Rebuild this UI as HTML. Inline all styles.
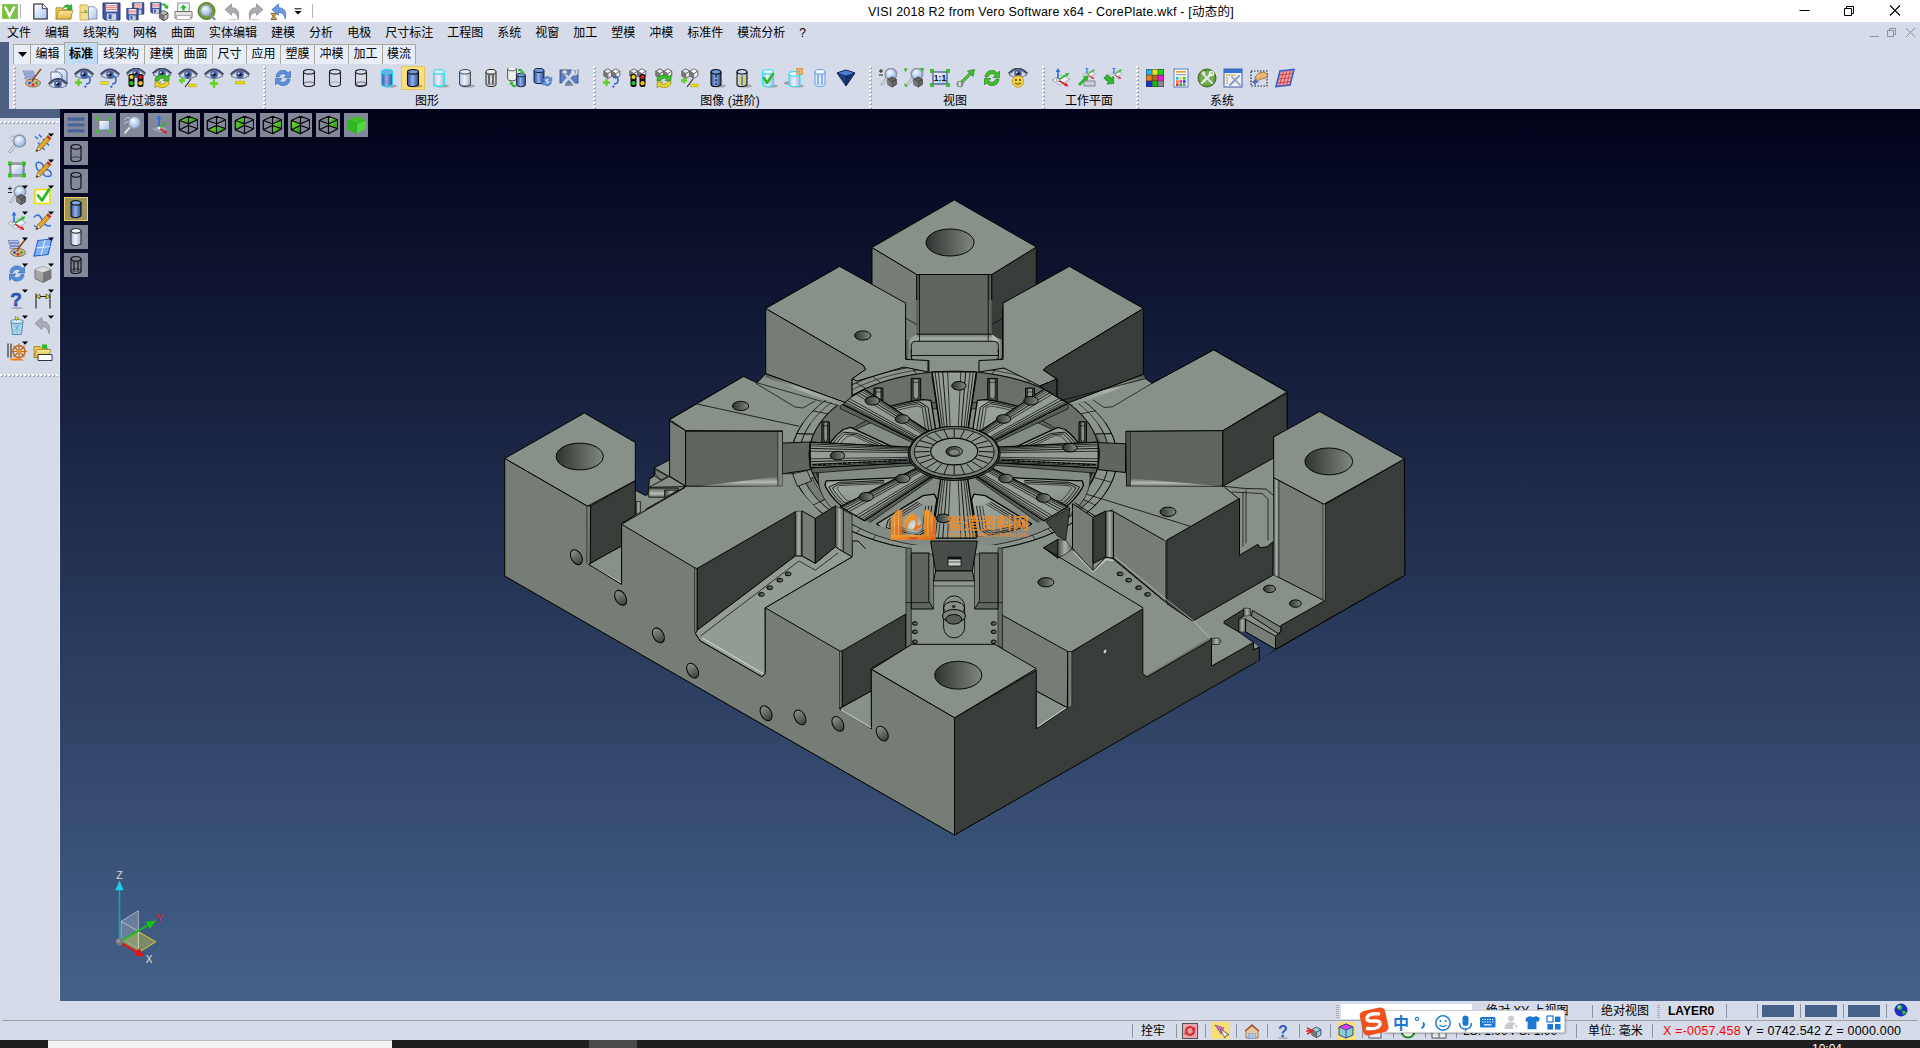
<!DOCTYPE html>
<html lang="zh"><head><meta charset="utf-8"><title>VISI 2018 R2 - CorePlate.wkf</title>
<style>

*{box-sizing:border-box;margin:0;padding:0}
html,body{width:1920px;height:1048px;overflow:hidden;background:#d6dbe9;font-family:"Liberation Sans","Noto Sans CJK SC",sans-serif;font-size:12px;color:#000}
.abs{position:absolute}
#title{position:absolute;left:0;top:0;width:1920px;height:22px;background:#fff}
#title .cap{position:absolute;left:868px;top:1px;font-size:12.5px;white-space:nowrap;color:#000;letter-spacing:0.22px}
#menu{position:absolute;left:0;top:22px;width:1920px;height:21px;background:#d6dbe9;white-space:nowrap}
#menu span{display:inline-block;padding:0 7px;height:21px;line-height:23px;font-size:12px}
#strip1{position:absolute;left:0;top:42px;width:9px;height:75px;background:#4d6082}
#strip2{position:absolute;left:0;top:109px;width:60px;height:9px;background:#4d6082}
#tabs{position:absolute;left:13px;top:44px;height:20px;white-space:nowrap;font-size:0}
#tabs span{display:inline-block;height:20px;line-height:19px;font-size:12px;background:#e7eefa;border-left:1px solid #aca899;border-top:1px solid #aca899;text-align:center;vertical-align:top}
#tabs span:last-child{border-right:1px solid #aca899}
#tabs span.act+span{border-left:none}
#tabs span.act{background:#c1dcf9;font-weight:bold;border-color:#aca899;border-right:1px solid #aca899;height:22px;margin-top:-2px;line-height:22px}
#ribbon{position:absolute;left:9px;top:64px;width:1911px;height:45px;background:#d6dbe9}
.glabel{position:absolute;top:94px;font-size:12px;line-height:14px;white-space:nowrap;transform:translateX(-50%)}
.grip{position:absolute;top:66px;width:3px;height:40px;background-image:linear-gradient(#fff 50%,transparent 50%);background-size:3px 4px}
.ic{position:absolute;width:24px;height:24px}
#view{position:absolute;left:60px;top:109px;width:1860px;height:892px;background:linear-gradient(#01021a 0%,#45618a 100%);overflow:hidden}
#left{position:absolute;left:0;top:118px;width:60px;height:883px;background:#d6dbe9;border-right:1px solid #e4e8f2}
.hgrip{position:absolute;left:2px;width:56px;height:3px;background-image:linear-gradient(90deg,#fff 50%,transparent 50%);background-size:4px 3px}
.vb{position:absolute;width:24px;height:24px;background:#83879a}
.vb.act{background:#a0975f;border:1px solid #f0cf6e}
#status{position:absolute;left:0;top:1001px;width:1920px;height:39px;background:#d6dbe9}
#task{position:absolute;left:0;top:1040px;width:1920px;height:8px;background:#1f1f1f}
.st{position:absolute;white-space:nowrap;font-size:12px;line-height:14px}
.sep{position:absolute;width:1px;background:#8d93a3}
</style></head>
<body>
<div id="title"><svg width="0" height="0" style="position:absolute"><defs>
<linearGradient id="gBlue" x1="0" x2="1"><stop offset="0" stop-color="#2c4f9e"/><stop offset="0.45" stop-color="#8fb0ea"/><stop offset="1" stop-color="#2a488f"/></linearGradient>
<linearGradient id="gLBlue" x1="0" x2="1"><stop offset="0" stop-color="#a9bfe6"/><stop offset="0.45" stop-color="#eef3fc"/><stop offset="1" stop-color="#9db2dc"/></linearGradient>
<linearGradient id="gGray" x1="0" x2="1"><stop offset="0" stop-color="#777"/><stop offset="0.45" stop-color="#e8e8e8"/><stop offset="1" stop-color="#666"/></linearGradient>
<linearGradient id="gEye" x1="0" y1="0" x2="0" y2="1"><stop offset="0" stop-color="#3c4a70"/><stop offset="1" stop-color="#8b9cc4"/></linearGradient>
<linearGradient id="gDoc" x1="0" y1="0" x2="1" y2="1"><stop offset="0" stop-color="#ffffff"/><stop offset="1" stop-color="#a9c2ef"/></linearGradient>
<linearGradient id="gFold" x1="0" y1="0" x2="0" y2="1"><stop offset="0" stop-color="#fbe9a0"/><stop offset="1" stop-color="#e2b23f"/></linearGradient>
<linearGradient id="gGreen" x1="0" y1="0" x2="1" y2="1"><stop offset="0" stop-color="#7be03a"/><stop offset="1" stop-color="#1f8f1a"/></linearGradient>
<linearGradient id="gSq" x1="0" y1="0" x2="1" y2="1"><stop offset="0" stop-color="#fffef0"/><stop offset="1" stop-color="#9fc0f5"/></linearGradient>
<radialGradient id="gLens" cx="0.4" cy="0.35" r="0.7"><stop offset="0" stop-color="#f4f9ff"/><stop offset="1" stop-color="#8db0e0"/></radialGradient>
<pattern id="gdot" width="4" height="4" patternUnits="userSpaceOnUse"><rect x="1" y="1" width="2" height="2" fill="#9fa3b0"/><rect x="0" y="0" width="2" height="2" fill="#ffffff"/></pattern>
</defs></svg><svg class="abs" style="left:2px;top:3.5px" width="16" height="15" viewBox="0 0 16 15"><rect x="0" y="0" width="16" height="15" fill="#7ac043"/><rect x="0" y="0" width="16" height="15" fill="none" stroke="#9ad56a" stroke-width="1"/><path d="M3.5 3.5 L7.5 12 L12.5 2.5" fill="none" stroke="#fff" stroke-width="2.4" stroke-linejoin="miter"/><circle cx="3.2" cy="3.2" r="0.9" fill="#fff"/></svg><div class="sep" style="left:20px;top:4px;height:14px;background:#b4b4b4"></div><svg class="abs" style="left:31px;top:2px" width="19" height="19" viewBox="0 0 20 20"><path d="M3 2 h9 l5 5 v11 h-14z" fill="url(#gDoc)" stroke="#111" stroke-width="1.1"/><path d="M12 2 v5 h5" fill="#fff" stroke="#111" stroke-width="0.8"/></svg><svg class="abs" style="left:55px;top:2px" width="19" height="19" viewBox="0 0 20 20"><path d="M1 6 h6 l2 2 h8 v10 h-16z" fill="#e9c34f" stroke="#9a7a1c" stroke-width="0.7"/><path d="M1 18 L4 9 h15 l-3 9z" fill="url(#gFold)" stroke="#9a7a1c" stroke-width="0.7"/><path d="M8 7 q3 -6 8 -3 l1.5 -1.5 l0.5 5.5 l-5.5 -0.5 l1.7 -1.6 q-3 -1.6 -6.2 1.1z" fill="#2eb82e" stroke="#137013" stroke-width="0.5"/></svg><svg class="abs" style="left:79px;top:2px" width="19" height="19" viewBox="0 0 20 20"><path d="M1 3 h7 l3 3 v5 h-10z" fill="#f4dc8a" stroke="#b99a3a" stroke-width="0.7"/><path d="M1 11 h7 l3 3 v5 h-10z" fill="#f4dc8a" stroke="#b99a3a" stroke-width="0.7"/><path d="M10 5 h6 l3 3 v10 h-9z" fill="url(#gDoc)" stroke="#6a7aa8" stroke-width="0.8"/><path d="M6 8 l3 2 l-3 2z" fill="#5fbf3a"/></svg><svg class="abs" style="left:102px;top:2px" width="19" height="19" viewBox="0 0 20 20"><g transform="translate(0 0) scale(1)"><path d="M1 1 h18 v18 h-16 l-2 -2z" fill="#3b57a6" stroke="#1c2c60" stroke-width="0.8"/><rect x="4" y="2" width="12" height="8" fill="#f4f4f4"/><path d="M4 4 h12 M4 6 h12 M4 8 h12" stroke="#d33" stroke-width="0.7"/><rect x="5" y="12" width="10" height="7" fill="#c9ced9"/><rect x="7" y="13" width="3" height="5" fill="#3b57a6"/></g></svg><svg class="abs" style="left:126px;top:2px" width="19" height="19" viewBox="0 0 20 20"><g transform="translate(6 0) scale(0.68)"><path d="M1 1 h18 v18 h-16 l-2 -2z" fill="#3b57a6" stroke="#1c2c60" stroke-width="0.8"/><rect x="4" y="2" width="12" height="8" fill="#f4f4f4"/><path d="M4 4 h12 M4 6 h12 M4 8 h12" stroke="#d33" stroke-width="0.7"/><rect x="5" y="12" width="10" height="7" fill="#c9ced9"/><rect x="7" y="13" width="3" height="5" fill="#3b57a6"/></g><g transform="translate(0 6) scale(0.68)"><path d="M1 1 h18 v18 h-16 l-2 -2z" fill="#3b57a6" stroke="#1c2c60" stroke-width="0.8"/><rect x="4" y="2" width="12" height="8" fill="#f4f4f4"/><path d="M4 4 h12 M4 6 h12 M4 8 h12" stroke="#d33" stroke-width="0.7"/><rect x="5" y="12" width="10" height="7" fill="#c9ced9"/><rect x="7" y="13" width="3" height="5" fill="#3b57a6"/></g></svg><svg class="abs" style="left:150px;top:2px" width="19" height="19" viewBox="0 0 20 20"><g transform="translate(0 0) scale(0.62)"><path d="M1 1 h18 v18 h-16 l-2 -2z" fill="#3b57a6" stroke="#1c2c60" stroke-width="0.8"/><rect x="4" y="2" width="12" height="8" fill="#f4f4f4"/><path d="M4 4 h12 M4 6 h12 M4 8 h12" stroke="#d33" stroke-width="0.7"/><rect x="5" y="12" width="10" height="7" fill="#c9ced9"/><rect x="7" y="13" width="3" height="5" fill="#3b57a6"/></g><g transform="translate(9 8) scale(0.9)"><path d="M1 4 L6 1 L11 4 L11 10 L6 13 L1 10z" fill="#bbb" stroke="#333" stroke-width="0.9"/><path d="M1 4 L6 7 L11 4 M6 7 V13" fill="none" stroke="#333" stroke-width="0.9"/><path d="M1 4 L6 7 V13 L1 10z" fill="#777"/></g><path d="M12 2 q4 -2 6 2 l1.4 -1 l-0.4 4.4 l-4.4 -1.2 l1.5 -1 q-1.4 -2 -3.6 -1.2z" fill="#2eb82e"/></svg><svg class="abs" style="left:174px;top:2px" width="19" height="19" viewBox="0 0 20 20"><rect x="4" y="1" width="12" height="9" fill="#eef2fa" stroke="#667" stroke-width="0.7"/><path d="M10 2.5 l-3.5 4 h2.3 v2.5 h2.4 v-2.5 h2.3z" fill="#2eb82e"/><path d="M1 10 h18 v7 h-18z" fill="#e4e4e4" stroke="#555" stroke-width="0.8"/><rect x="3" y="14" width="14" height="4.5" fill="#fff" stroke="#777" stroke-width="0.6"/></svg><svg class="abs" style="left:197px;top:2px" width="19" height="19" viewBox="0 0 20 20"><circle cx="10" cy="9.5" r="9" fill="#6f9a3a" stroke="#4f7a20" stroke-width="1"/><circle cx="9.5" cy="9" r="5.6" fill="url(#gLens)" stroke="#9aa6b8" stroke-width="1.3"/><path d="M14 13.5 L18.5 18" stroke="#8a93a3" stroke-width="2.4" stroke-linecap="round"/></svg><svg class="abs" style="left:223px;top:2px" width="19" height="19" viewBox="0 0 20 20"><g><path d="M2 8 L9 2 V6 C15 6 18 10 16 18 C15 13 13 11 9 11 V14z" fill="#a9adb3" stroke="#80848a" stroke-width="0.7"/></g><ellipse cx="11" cy="18.5" rx="6" ry="1.2" fill="#000" opacity="0.15"/></svg><svg class="abs" style="left:246px;top:2px" width="19" height="19" viewBox="0 0 20 20"><g transform="translate(20 0) scale(-1 1)"><path d="M2 8 L9 2 V6 C15 6 18 10 16 18 C15 13 13 11 9 11 V14z" fill="#a9adb3" stroke="#80848a" stroke-width="0.7"/></g><ellipse cx="9" cy="18.5" rx="6" ry="1.2" fill="#000" opacity="0.15"/></svg><svg class="abs" style="left:270px;top:2px" width="19" height="19" viewBox="0 0 20 20"><g><path d="M2 8 L9 2 V6 C15 6 18 10 16 18 C15 13 13 11 9 11 V14z" fill="#6a9be0" stroke="#3a66b0" stroke-width="0.7"/></g><path d="M1 12 h6 l-2.2 3 l2.2 3.5 h-6 l2.2 -3.5z" fill="#c9a35a" stroke="#6a4a12" stroke-width="0.8"/></svg><svg class="abs" style="left:294px;top:8px" width="8" height="8" viewBox="0 0 8 8"><path d="M0.5 0.8 h7" stroke="#000" stroke-width="1"/><path d="M0.5 3 h7 l-3.5 3.6z" fill="#000"/></svg><div class="sep" style="left:312px;top:4px;height:14px;background:#b4b4b4"></div><div class="cap">VISI 2018 R2 from Vero Software x64 - CorePlate.wkf - [动态的]</div><svg class="abs" style="left:1790px;top:0" width="130" height="22" viewBox="0 0 130 22"><path d="M9.5 10.5 h10" stroke="#000" stroke-width="1"/><path d="M54.5 8.5 h7 v7 h-7z M56.5 8.5 v-2 h7 v7 h-2" fill="none" stroke="#000" stroke-width="1"/><path d="M100 5.5 l10 10 M110 5.5 l-10 10" stroke="#000" stroke-width="1.1"/></svg></div>
<div id="menu"><span>文件</span><span>编辑</span><span>线架构</span><span>网格</span><span>曲面</span><span>实体编辑</span><span>建模</span><span>分析</span><span>电极</span><span>尺寸标注</span><span>工程图</span><span>系统</span><span>视窗</span><span>加工</span><span>塑模</span><span>冲模</span><span>标准件</span><span>模流分析</span><span>?</span><svg class="abs" style="left:1866px;top:3px" width="54" height="16" viewBox="0 0 54 16"><path d="M4 11.5 h9" stroke="#8d919c" stroke-width="1"/><path d="M21.5 5.5 h6 v6 h-6z M23.5 5.5 v-2 h6 v6 h-2" fill="none" stroke="#8d919c" stroke-width="1"/><path d="M40 3 l9 9 M49 3 l-9 9" stroke="#8d919c" stroke-width="1"/></svg></div>
<div id="ribbon"></div><div id="strip1"></div>
<div id="tabs"><span style="width:17px"><svg width="9" height="5" viewBox="0 0 9 5" style="vertical-align:middle"><path d="M0 0h9L4.5 5z" fill="#000"/></svg></span><span style="width:34px">编辑</span><span style="width:34px" class="act">标准</span><span style="width:46px">线架构</span><span style="width:34px">建模</span><span style="width:34px">曲面</span><span style="width:34px">尺寸</span><span style="width:34px">应用</span><span style="width:34px">塑膜</span><span style="width:34px">冲模</span><span style="width:34px">加工</span><span style="width:34px">模流</span></div>
<svg class="abs" style="left:13px;top:66px" width="3" height="43"><rect width="3" height="43" fill="url(#gdot)"/></svg><svg class="abs" style="left:22px;top:68px" width="20" height="20" viewBox="0 0 20 20"><path d="M1 3 h10 l1 2 h-10z M2 6 h10 l1 2 h-10z M3 9 h9 l1 2 h-10z" fill="#b9c7ee" stroke="#5266a8" stroke-width="0.6"/><ellipse cx="11" cy="15" rx="7.5" ry="4" fill="#d8b48a" stroke="#7a5a33" stroke-width="0.8"/><circle cx="7.5" cy="15" r="1.5" fill="#2b5fd0"/><circle cx="11" cy="16.7" r="1.5" fill="#d12f2f"/><circle cx="14.5" cy="15" r="1.5" fill="#2ea82e"/><path d="M19 1 L10.5 12" stroke="#8a4a1d" stroke-width="1.6"/><path d="M10.5 12 l-1.6 2.6 l2.8 -1.6z" fill="#333"/></svg><svg class="abs" style="left:48px;top:68px" width="20" height="20" viewBox="0 0 20 20"><path d="M8 1 h8 l3 3 v11 h-11z" fill="url(#gDoc)" stroke="#3a4c7d" stroke-width="0.8"/><path d="M3 4 h8 l3 3 v10 h-11z" fill="url(#gDoc)" stroke="#3a4c7d" stroke-width="0.8"/><g transform="translate(0 9.5)"><path d="M1 8 Q10 -2 19 8 Q10 13 1 8z" fill="#d4dbea" stroke="#4f5a7a" stroke-width="0.8"/><path d="M0.5 6.5 Q10 -3.5 19.5 6.5" fill="none" stroke="#3c4563" stroke-width="1.8"/><circle cx="10" cy="6.6" r="3.8" fill="#46639d"/><circle cx="10" cy="6.6" r="1.7" fill="#0f1730"/><circle cx="8.8" cy="5.4" r="0.9" fill="#dfe8fb"/></g></svg><svg class="abs" style="left:74px;top:68px" width="20" height="20" viewBox="0 0 20 20"><g transform="translate(0 0)"><path d="M1 8 Q10 -2 19 8 Q10 13 1 8z" fill="#d4dbea" stroke="#4f5a7a" stroke-width="0.8"/><path d="M0.5 6.5 Q10 -3.5 19.5 6.5" fill="none" stroke="#3c4563" stroke-width="1.8"/><circle cx="10" cy="6.6" r="3.8" fill="#46639d"/><circle cx="10" cy="6.6" r="1.7" fill="#0f1730"/><circle cx="8.8" cy="5.4" r="0.9" fill="#dfe8fb"/></g><path d="M1 14.5 h7 M4.5 11 v7" stroke="#62d321" stroke-width="2.4" fill="none"/><path d="M11 10 q5 -4 5 2 q0 4 -4 4" fill="none" stroke="#2f66c8" stroke-width="1.6"/><path d="M12.5 17.5 l-3 0.5 l2.5 2.5z" fill="#2f66c8"/></svg><svg class="abs" style="left:100px;top:68px" width="20" height="20" viewBox="0 0 20 20"><g transform="translate(0 0)"><path d="M1 8 Q10 -2 19 8 Q10 13 1 8z" fill="#d4dbea" stroke="#4f5a7a" stroke-width="0.8"/><path d="M0.5 6.5 Q10 -3.5 19.5 6.5" fill="none" stroke="#3c4563" stroke-width="1.8"/><circle cx="10" cy="6.6" r="3.8" fill="#46639d"/><circle cx="10" cy="6.6" r="1.7" fill="#0f1730"/><circle cx="8.8" cy="5.4" r="0.9" fill="#dfe8fb"/></g><path d="M0.6 15 h7.8" stroke="#a79c00" stroke-width="3.2" fill="none"/><path d="M1 15 h7" stroke="#efe300" stroke-width="2.2" fill="none"/><path d="M11 10 q5 -4 5 2 q0 4 -4 4" fill="none" stroke="#2f66c8" stroke-width="1.6"/><path d="M12.5 17.5 l-3 0.5 l2.5 2.5z" fill="#2f66c8"/></svg><svg class="abs" style="left:126px;top:68px" width="20" height="20" viewBox="0 0 20 20"><g transform="translate(0 -1)"><path d="M1 8 Q10 -2 19 8 Q10 13 1 8z" fill="#d4dbea" stroke="#4f5a7a" stroke-width="0.8"/><path d="M0.5 6.5 Q10 -3.5 19.5 6.5" fill="none" stroke="#3c4563" stroke-width="1.8"/><circle cx="10" cy="6.6" r="3.8" fill="#46639d"/><circle cx="10" cy="6.6" r="1.7" fill="#0f1730"/><circle cx="8.8" cy="5.4" r="0.9" fill="#dfe8fb"/></g><rect x="2.5" y="6" width="6" height="13" rx="2" fill="#111"/><circle cx="5.5" cy="9" r="2.1" fill="#f2d21b"/><circle cx="5.5" cy="15.2" r="2.1" fill="#1fc41f"/><rect x="11.5" y="6" width="6" height="13" rx="2" fill="#111"/><circle cx="14.5" cy="9" r="2.1" fill="#e31b1b"/><circle cx="14.5" cy="15.2" r="2.1" fill="#f2c21b"/></svg><svg class="abs" style="left:152px;top:68px" width="20" height="20" viewBox="0 0 20 20"><g transform="translate(0 -1)"><path d="M1 8 Q10 -2 19 8 Q10 13 1 8z" fill="#d4dbea" stroke="#4f5a7a" stroke-width="0.8"/><path d="M0.5 6.5 Q10 -3.5 19.5 6.5" fill="none" stroke="#3c4563" stroke-width="1.8"/><circle cx="10" cy="6.6" r="3.8" fill="#46639d"/><circle cx="10" cy="6.6" r="1.7" fill="#0f1730"/><circle cx="8.8" cy="5.4" r="0.9" fill="#dfe8fb"/></g><path d="M3 13 A7 5.5 0 0 1 15 8.5 L17 6.5 V12.5 H11 L13 10.5 A4.5 3.5 0 0 0 6.5 13z" fill="#3fbf2a" stroke="#1d7a12" stroke-width="0.6"/><path d="M17 13.5 A7 5.5 0 0 1 5 18 L3 20 V14 H9 L7 16 A4.5 3.5 0 0 0 13.5 13.5z" fill="#e6d52a" stroke="#8d7f00" stroke-width="0.6"/></svg><svg class="abs" style="left:178px;top:68px" width="20" height="20" viewBox="0 0 20 20"><g transform="translate(0 0)"><path d="M1 8 Q10 -2 19 8 Q10 13 1 8z" fill="#d4dbea" stroke="#4f5a7a" stroke-width="0.8"/><path d="M0.5 6.5 Q10 -3.5 19.5 6.5" fill="none" stroke="#3c4563" stroke-width="1.8"/><circle cx="10" cy="6.6" r="3.8" fill="#46639d"/><circle cx="10" cy="6.6" r="1.7" fill="#0f1730"/><circle cx="8.8" cy="5.4" r="0.9" fill="#dfe8fb"/></g><path d="M1 12.5 h6 M4 9.5 v6" stroke="#62d321" stroke-width="2.4" fill="none"/><path d="M7 19 L13 11" stroke="#222" stroke-width="1.1"/><path d="M10.6 17.5 h7.8" stroke="#a79c00" stroke-width="3.2" fill="none"/><path d="M11 17.5 h7" stroke="#efe300" stroke-width="2.2" fill="none"/></svg><svg class="abs" style="left:204px;top:68px" width="20" height="20" viewBox="0 0 20 20"><g transform="translate(0 0)"><path d="M1 8 Q10 -2 19 8 Q10 13 1 8z" fill="#d4dbea" stroke="#4f5a7a" stroke-width="0.8"/><path d="M0.5 6.5 Q10 -3.5 19.5 6.5" fill="none" stroke="#3c4563" stroke-width="1.8"/><circle cx="10" cy="6.6" r="3.8" fill="#46639d"/><circle cx="10" cy="6.6" r="1.7" fill="#0f1730"/><circle cx="8.8" cy="5.4" r="0.9" fill="#dfe8fb"/></g><path d="M5.8 15.5 h8.4 M10 11.3 v8.4" stroke="#62d321" stroke-width="2.4" fill="none"/></svg><svg class="abs" style="left:230px;top:68px" width="20" height="20" viewBox="0 0 20 20"><g transform="translate(0 0)"><path d="M1 8 Q10 -2 19 8 Q10 13 1 8z" fill="#d4dbea" stroke="#4f5a7a" stroke-width="0.8"/><path d="M0.5 6.5 Q10 -3.5 19.5 6.5" fill="none" stroke="#3c4563" stroke-width="1.8"/><circle cx="10" cy="6.6" r="3.8" fill="#46639d"/><circle cx="10" cy="6.6" r="1.7" fill="#0f1730"/><circle cx="8.8" cy="5.4" r="0.9" fill="#dfe8fb"/></g><path d="M5.1 14.5 h9.8" stroke="#a79c00" stroke-width="3.2" fill="none"/><path d="M5.5 14.5 h9" stroke="#efe300" stroke-width="2.2" fill="none"/></svg><div class="glabel" style="left:136px">属性/过滤器</div><svg class="abs" style="left:263px;top:66px" width="3" height="43"><rect width="3" height="43" fill="url(#gdot)"/></svg><svg class="abs" style="left:273px;top:68px" width="20" height="20" viewBox="0 0 20 20"><g transform="scale(1)"><path d="M3 9 A7 7 0 0 1 15.5 5 L17.5 3 V9.5 H11 L13.3 7.2 A4.2 4.2 0 0 0 6 9z" fill="#5b8fd9" stroke="#2e63b5" stroke-width="0.6"/><path d="M17 11 A7 7 0 0 1 4.5 15 L2.5 17 V10.5 H9 L6.7 12.8 A4.2 4.2 0 0 0 14 11z" fill="#5b8fd9" stroke="#2e63b5" stroke-width="0.6"/></g></svg><svg class="abs" style="left:299px;top:68px" width="20" height="20" viewBox="0 0 20 20"><path d="M4.5 3.8 v12.4 a5.5 2.3 0 0 0 11 0 v-12.4" fill="none" stroke="#222" stroke-width="1.1"/><ellipse cx="10" cy="3.8" rx="5.5" ry="2.3" fill="none" stroke="#222" stroke-width="1.1"/><path d="M4.5 16.2 a5.5 2.3 0 0 1 11 0" fill="none" stroke="#222" stroke-width="0.88" opacity="0.7"/></svg><svg class="abs" style="left:325px;top:68px" width="20" height="20" viewBox="0 0 20 20"><path d="M4.5 3.8 v12.4 a5.5 2.3 0 0 0 11 0 v-12.4" fill="none" stroke="#222" stroke-width="1.1"/><ellipse cx="10" cy="3.8" rx="5.5" ry="2.3" fill="none" stroke="#222" stroke-width="1.1"/><path d="M4.5 16.2 a5.5 2.3 0 0 1 11 0" fill="none" stroke="#888" stroke-width="0.6"/></svg><svg class="abs" style="left:351px;top:68px" width="20" height="20" viewBox="0 0 20 20"><path d="M4.5 3.8 v12.4 a5.5 2.3 0 0 0 11 0 v-12.4" fill="none" stroke="#222" stroke-width="1.1"/><ellipse cx="10" cy="3.8" rx="5.5" ry="2.3" fill="none" stroke="#222" stroke-width="1.1"/><path d="M4.5 16.2 a5.5 2.3 0 0 1 11 0" fill="none" stroke="#222" stroke-width="0.88" opacity="0.7"/><path d="M4.5 15.4 a5.5 2.3 0 0 0 11 0" fill="none" stroke="#222" stroke-width="0.8"/></svg><svg class="abs" style="left:377px;top:68px" width="20" height="20" viewBox="0 0 20 20"><ellipse cx="13" cy="18" rx="7" ry="1.6" fill="#000" opacity="0.25"/><path d="M4.5 3.8 v12.4 a5.5 2.3 0 0 0 11 0 v-12.4" fill="url(#gBlue)" stroke="#1fd6ee" stroke-width="1.3"/><ellipse cx="10" cy="3.8" rx="5.5" ry="2.3" fill="#7fa4e6" stroke="#1fd6ee" stroke-width="1.3"/></svg><div class="abs" style="left:401px;top:66px;width:24px;height:24px;background:#fbdf7b;border:1px solid #e8c45a"></div><svg class="abs" style="left:403px;top:68px" width="20" height="20" viewBox="0 0 20 20"><ellipse cx="13" cy="18" rx="7" ry="1.6" fill="#000" opacity="0.25"/><path d="M4.5 3.8 v12.4 a5.5 2.3 0 0 0 11 0 v-12.4" fill="url(#gBlue)" stroke="#111" stroke-width="1.1"/><ellipse cx="10" cy="3.8" rx="5.5" ry="2.3" fill="#6f95dc" stroke="#111" stroke-width="1.1"/></svg><svg class="abs" style="left:429px;top:68px" width="20" height="20" viewBox="0 0 20 20"><ellipse cx="13" cy="18" rx="7" ry="1.6" fill="#000" opacity="0.25"/><path d="M4.5 3.8 v12.4 a5.5 2.3 0 0 0 11 0 v-12.4" fill="url(#gLBlue)" stroke="#35dff0" stroke-width="1.2"/><ellipse cx="10" cy="3.8" rx="5.5" ry="2.3" fill="#dfe8f8" stroke="#35dff0" stroke-width="1.2"/><path d="M4.5 15.4 a5.5 2.3 0 0 0 11 0" fill="none" stroke="#35dff0" stroke-width="0.8"/></svg><svg class="abs" style="left:455px;top:68px" width="20" height="20" viewBox="0 0 20 20"><ellipse cx="13" cy="18" rx="7" ry="1.6" fill="#000" opacity="0.25"/><path d="M4.5 3.8 v12.4 a5.5 2.3 0 0 0 11 0 v-12.4" fill="url(#gLBlue)" stroke="#444" stroke-width="1"/><ellipse cx="10" cy="3.8" rx="5.5" ry="2.3" fill="#dfe8f8" stroke="#444" stroke-width="1"/><path d="M4.5 15.4 a5.5 2.3 0 0 0 11 0" fill="none" stroke="#667" stroke-width="0.7"/></svg><svg class="abs" style="left:481px;top:68px" width="20" height="20" viewBox="0 0 20 20"><path d="M5 3.8 v12.4 a5 2.3 0 0 0 10 0 v-12.4" fill="#d9d9d9" stroke="#222" stroke-width="1"/><ellipse cx="10" cy="3.8" rx="5" ry="2.3" fill="#eee" stroke="#222" stroke-width="1"/><path d="M7 6 L9 17 M9 6 L7 17 M11 6 L13 17 M13 6 L11 17" stroke="#222" stroke-width="0.7" fill="none"/></svg><svg class="abs" style="left:507px;top:68px" width="20" height="20" viewBox="0 0 20 20"><g transform="translate(-3 -2) scale(0.8)"><path d="M4.5 3.8 v12.4 a5.5 2.3 0 0 0 11 0 v-12.4" fill="#eee" stroke="#444" stroke-width="1.1"/><ellipse cx="10" cy="3.8" rx="5.5" ry="2.3" fill="#fff" stroke="#444" stroke-width="1.1"/></g><g transform="translate(6 4) scale(0.8)"><path d="M4.5 3.8 v12.4 a5.5 2.3 0 0 0 11 0 v-12.4" fill="url(#gBlue)" stroke="#123" stroke-width="1.1"/><ellipse cx="10" cy="3.8" rx="5.5" ry="2.3" fill="#6f95dc" stroke="#123" stroke-width="1.1"/></g><path d="M11 1 q4 -1 5 3 l1.5 -1 l-1 4 l-3.5 -2 l1.5 -0.6 q-1 -2 -3.5 -1.4z" fill="#2eb82e"/><path d="M9 19 q-4 1 -5 -3 l-1.5 1 l1 -4 l3.5 2 l-1.5 0.6 q1 2 3.5 1.4z" fill="#2eb82e"/></svg><svg class="abs" style="left:533px;top:68px" width="20" height="20" viewBox="0 0 20 20"><g transform="translate(-3 -1) scale(0.9)"><path d="M4.5 3.8 v12.4 a5.5 2.3 0 0 0 11 0 v-12.4" fill="url(#gBlue)" stroke="#123" stroke-width="1.1"/><ellipse cx="10" cy="3.8" rx="5.5" ry="2.3" fill="#6f95dc" stroke="#123" stroke-width="1.1"/></g><g transform="translate(8 7) scale(0.62)"><g transform="scale(1)"><path d="M3 9 A7 7 0 0 1 15.5 5 L17.5 3 V9.5 H11 L13.3 7.2 A4.2 4.2 0 0 0 6 9z" fill="#5b8fd9" stroke="#2e63b5" stroke-width="0.6"/><path d="M17 11 A7 7 0 0 1 4.5 15 L2.5 17 V10.5 H9 L6.7 12.8 A4.2 4.2 0 0 0 14 11z" fill="#5b8fd9" stroke="#2e63b5" stroke-width="0.6"/></g></g></svg><svg class="abs" style="left:559px;top:68px" width="20" height="20" viewBox="0 0 20 20"><rect x="1" y="2" width="18" height="13" fill="#5b7fc4" stroke="#2d4378" stroke-width="0.8"/><rect x="6" y="15" width="8" height="3" fill="#7e8aa3"/><path d="M3 17 L15 4" stroke="#d9dde6" stroke-width="2.6" stroke-linecap="round"/><path d="M16 17 L5 5" stroke="#cfd3dc" stroke-width="2.2" stroke-linecap="round"/><path d="M2 4 l4-3 l3 3 l-3 3z" fill="#c9ced9" stroke="#555" stroke-width="0.5"/><circle cx="15.5" cy="4" r="2.6" fill="none" stroke="#d9dde6" stroke-width="1.6"/></svg><div class="glabel" style="left:427px">图形</div><svg class="abs" style="left:593px;top:66px" width="3" height="43"><rect width="3" height="43" fill="url(#gdot)"/></svg><svg class="abs" style="left:602px;top:68px" width="20" height="20" viewBox="0 0 20 20"><g transform="translate(1 0) scale(0.8)"><path d="M1 4 L6 1 L11 4 L11 10 L6 13 L1 10z" fill="#e8e8e8" stroke="#333" stroke-width="0.9"/><path d="M1 4 L6 7 L11 4 M6 7 V13" fill="none" stroke="#333" stroke-width="0.9"/><path d="M1 4 L6 7 V13 L1 10z" fill="#777"/></g><g transform="translate(9 0) scale(0.8)"><path d="M1 4 L6 1 L11 4 L11 10 L6 13 L1 10z" fill="#fff" stroke="#333" stroke-width="0.9"/><path d="M1 4 L6 7 L11 4 M6 7 V13" fill="none" stroke="#333" stroke-width="0.9"/><path d="M1 4 L6 7 V13 L1 10z" fill="#777"/></g><path d="M1 14.5 h7 M4.5 11 v7" stroke="#62d321" stroke-width="2.4" fill="none"/><path d="M11 10 q5 -4 5 2 q0 4 -4 4" fill="none" stroke="#2f66c8" stroke-width="1.6"/><path d="M12.5 17.5 l-3 0.5 l2.5 2.5z" fill="#2f66c8"/></svg><svg class="abs" style="left:628px;top:68px" width="20" height="20" viewBox="0 0 20 20"><g transform="translate(1 0) scale(0.8)"><path d="M1 4 L6 1 L11 4 L11 10 L6 13 L1 10z" fill="#e8e8e8" stroke="#333" stroke-width="0.9"/><path d="M1 4 L6 7 L11 4 M6 7 V13" fill="none" stroke="#333" stroke-width="0.9"/><path d="M1 4 L6 7 V13 L1 10z" fill="#777"/></g><g transform="translate(9 0) scale(0.8)"><path d="M1 4 L6 1 L11 4 L11 10 L6 13 L1 10z" fill="#fff" stroke="#333" stroke-width="0.9"/><path d="M1 4 L6 7 L11 4 M6 7 V13" fill="none" stroke="#333" stroke-width="0.9"/><path d="M1 4 L6 7 V13 L1 10z" fill="#777"/></g><rect x="2.5" y="6" width="6" height="13" rx="2" fill="#111"/><circle cx="5.5" cy="9" r="2.1" fill="#f2d21b"/><circle cx="5.5" cy="15.2" r="2.1" fill="#1fc41f"/><rect x="11.5" y="6" width="6" height="13" rx="2" fill="#111"/><circle cx="14.5" cy="9" r="2.1" fill="#e31b1b"/><circle cx="14.5" cy="15.2" r="2.1" fill="#f2c21b"/></svg><svg class="abs" style="left:654px;top:68px" width="20" height="20" viewBox="0 0 20 20"><g transform="translate(1 0) scale(0.8)"><path d="M1 4 L6 1 L11 4 L11 10 L6 13 L1 10z" fill="#e8e8e8" stroke="#333" stroke-width="0.9"/><path d="M1 4 L6 7 L11 4 M6 7 V13" fill="none" stroke="#333" stroke-width="0.9"/><path d="M1 4 L6 7 V13 L1 10z" fill="#777"/></g><g transform="translate(9 0) scale(0.8)"><path d="M1 4 L6 1 L11 4 L11 10 L6 13 L1 10z" fill="#fff" stroke="#333" stroke-width="0.9"/><path d="M1 4 L6 7 L11 4 M6 7 V13" fill="none" stroke="#333" stroke-width="0.9"/><path d="M1 4 L6 7 V13 L1 10z" fill="#777"/></g><path d="M3 13 A7 5.5 0 0 1 15 8.5 L17 6.5 V12.5 H11 L13 10.5 A4.5 3.5 0 0 0 6.5 13z" fill="#3fbf2a" stroke="#1d7a12" stroke-width="0.6"/><path d="M17 13.5 A7 5.5 0 0 1 5 18 L3 20 V14 H9 L7 16 A4.5 3.5 0 0 0 13.5 13.5z" fill="#e6d52a" stroke="#8d7f00" stroke-width="0.6"/></svg><svg class="abs" style="left:680px;top:68px" width="20" height="20" viewBox="0 0 20 20"><g transform="translate(1 0) scale(0.8)"><path d="M1 4 L6 1 L11 4 L11 10 L6 13 L1 10z" fill="#e8e8e8" stroke="#333" stroke-width="0.9"/><path d="M1 4 L6 7 L11 4 M6 7 V13" fill="none" stroke="#333" stroke-width="0.9"/><path d="M1 4 L6 7 V13 L1 10z" fill="#777"/></g><g transform="translate(9 0) scale(0.8)"><path d="M1 4 L6 1 L11 4 L11 10 L6 13 L1 10z" fill="#fff" stroke="#333" stroke-width="0.9"/><path d="M1 4 L6 7 L11 4 M6 7 V13" fill="none" stroke="#333" stroke-width="0.9"/><path d="M1 4 L6 7 V13 L1 10z" fill="#777"/></g><path d="M1 12.5 h6 M4 9.5 v6" stroke="#62d321" stroke-width="2.4" fill="none"/><path d="M7 19 L13 11" stroke="#222" stroke-width="1.1"/><path d="M10.6 17.5 h7.8" stroke="#a79c00" stroke-width="3.2" fill="none"/><path d="M11 17.5 h7" stroke="#efe300" stroke-width="2.2" fill="none"/></svg><svg class="abs" style="left:706px;top:68px" width="20" height="20" viewBox="0 0 20 20"><ellipse cx="13" cy="18" rx="7" ry="1.6" fill="#000" opacity="0.25"/><path d="M5 3.8 v12.4 a5 2.3 0 0 0 10 0 v-12.4" fill="url(#gBlue)" stroke="#111" stroke-width="1.1"/><ellipse cx="10" cy="3.8" rx="5" ry="2.3" fill="#6f95dc" stroke="#111" stroke-width="1.1"/><path d="M10 7 V17" stroke="#111" stroke-width="1.2" stroke-dasharray="2.5 1.5"/></svg><svg class="abs" style="left:732px;top:68px" width="20" height="20" viewBox="0 0 20 20"><ellipse cx="13" cy="18" rx="7" ry="1.6" fill="#000" opacity="0.25"/><path d="M5 3.8 v12.4 a5 2.3 0 0 0 10 0 v-12.4" fill="url(#gLBlue)" stroke="#111" stroke-width="1.1"/><ellipse cx="10" cy="3.8" rx="5" ry="2.3" fill="#c9d7f2" stroke="#111" stroke-width="1.1"/><path d="M8 7.5 V17 M12 7.5 V17" stroke="#e0cf2a" stroke-width="1.6"/><path d="M10 7.5 V17.5" stroke="#3b5fb0" stroke-width="1.4"/></svg><svg class="abs" style="left:758px;top:68px" width="20" height="20" viewBox="0 0 20 20"><ellipse cx="13" cy="18" rx="7" ry="1.6" fill="#000" opacity="0.25"/><path d="M4.5 3.8 v12.4 a5.5 2.3 0 0 0 11 0 v-12.4" fill="url(#gLBlue)" stroke="#35dff0" stroke-width="1.2"/><ellipse cx="10" cy="3.8" rx="5.5" ry="2.3" fill="#eef3fc" stroke="#35dff0" stroke-width="1.2"/><path d="M6 10 l3 5 l6 -9" fill="none" stroke="#2eb82e" stroke-width="2.6" stroke-linecap="round" stroke-linejoin="round"/></svg><svg class="abs" style="left:784px;top:68px" width="20" height="20" viewBox="0 0 20 20"><ellipse cx="13" cy="18" rx="7" ry="1.6" fill="#000" opacity="0.25"/><ellipse cx="5" cy="15" rx="5" ry="1.8" fill="#000" opacity="0.3"/><path d="M5 5.8 v10.4 a5.5 2.3 0 0 0 11 0 v-10.4" fill="url(#gLBlue)" stroke="#35dff0" stroke-width="1.1"/><ellipse cx="10.5" cy="5.8" rx="5.5" ry="2.3" fill="#eef3fc" stroke="#35dff0" stroke-width="1.1"/><rect x="13" y="0.8" width="5.2" height="5.2" fill="none" stroke="#e88a1a" stroke-width="1.3"/><circle cx="15.6" cy="3.4" r="1.1" fill="#e88a1a"/></svg><svg class="abs" style="left:810px;top:68px" width="20" height="20" viewBox="0 0 20 20"><path d="M5 3.8 v12.4 a5 2.3 0 0 0 10 0 v-12.4" fill="#e3ecfb" stroke="#5a8fe0" stroke-width="0.9"/><ellipse cx="10" cy="3.8" rx="5" ry="2.3" fill="#f4f8ff" stroke="#5a8fe0" stroke-width="0.9"/><path d="M7 6 L9 17 M9 6 L7 17 M11 6 L13 17 M13 6 L11 17" stroke="#5a8fe0" stroke-width="0.7" fill="none"/></svg><svg class="abs" style="left:836px;top:68px" width="20" height="20" viewBox="0 0 20 20"><path d="M1 5 L10 2 L19 5 L10 18z" fill="#1f3f86" stroke="#0b1a40" stroke-width="0.8"/><path d="M1 5 L10 8 L19 5 L10 2z" fill="#4f7fd6" stroke="#0b1a40" stroke-width="0.6"/><path d="M10 8 V18 L19 5z" fill="#16306b"/><path d="M10 8 V18" stroke="#0b1a40" stroke-width="0.6"/></svg><div class="glabel" style="left:730px">图像 (进阶)</div><svg class="abs" style="left:869px;top:66px" width="3" height="43"><rect width="3" height="43" fill="url(#gdot)"/></svg><svg class="abs" style="left:878px;top:68px" width="20" height="20" viewBox="0 0 20 20"><g transform="translate(2 -1) scale(0.95)"><path d="M2 18 L8 11" stroke="#9aa0a8" stroke-width="3" stroke-linecap="round"/><path d="M2 18 L8 11" stroke="#e8ebf0" stroke-width="1.2" stroke-linecap="round"/><circle cx="11.5" cy="7.5" r="6" fill="url(#gLens)" stroke="#8c96a8" stroke-width="1.6"/></g><path d="M1 3 h4 M3 1 v4 M1 7 h4" stroke="#111" stroke-width="0.9"/><g transform="translate(9 8) scale(0.85)"><path d="M1 4 L6 1 L11 4 L11 10 L6 13 L1 10z" fill="#666" stroke="#333" stroke-width="0.9"/><path d="M1 4 L6 7 L11 4 M6 7 V13" fill="none" stroke="#333" stroke-width="0.9"/><path d="M1 4 L6 7 V13 L1 10z" fill="#777"/></g></svg><svg class="abs" style="left:904px;top:68px" width="20" height="20" viewBox="0 0 20 20"><g transform="translate(2 -1) scale(0.95)"><path d="M2 18 L8 11" stroke="#9aa0a8" stroke-width="3" stroke-linecap="round"/><path d="M2 18 L8 11" stroke="#e8ebf0" stroke-width="1.2" stroke-linecap="round"/><circle cx="11.5" cy="7.5" r="6" fill="url(#gLens)" stroke="#8c96a8" stroke-width="1.6"/></g><g transform="translate(9 8) scale(0.85)"><path d="M1 4 L6 1 L11 4 L11 10 L6 13 L1 10z" fill="#666" stroke="#333" stroke-width="0.9"/><path d="M1 4 L6 7 L11 4 M6 7 V13" fill="none" stroke="#333" stroke-width="0.9"/><path d="M1 4 L6 7 V13 L1 10z" fill="#777"/></g><path d="M0 0 l4 1 l-3 3z M16 0 l4 0 l-1 4z M0 15 l1 4 l3 -1z" fill="#39b524"/></svg><svg class="abs" style="left:930px;top:68px" width="20" height="20" viewBox="0 0 20 20"><rect x="3" y="4" width="14" height="12" fill="url(#gSq)" stroke="#26338a" stroke-width="1"/><text x="10" y="13.3" font-size="8.5" font-weight="bold" text-anchor="middle" font-family="Liberation Sans,sans-serif" fill="#111">1:1</text><path d="M0 1 h4 v4 h-4z M16 1 h4 v4 h-4z M0 15 h4 v4 h-4z M16 15 h4 v4 h-4z" fill="#39b524" opacity="0.9"/></svg><svg class="abs" style="left:956px;top:68px" width="20" height="20" viewBox="0 0 20 20"><path d="M4 16 L16 4" stroke="#1d8a1d" stroke-width="3"/><path d="M4 16 L16 4" stroke="#5fd64a" stroke-width="1.4"/><path d="M18.5 1.5 l-7 1.5 l5.5 5.5z" fill="#3fbf2a" stroke="#1d7a12" stroke-width="0.6"/><circle cx="4" cy="16" r="3" fill="url(#gGray)" stroke="#555" stroke-width="0.6"/></svg><svg class="abs" style="left:982px;top:68px" width="20" height="20" viewBox="0 0 20 20"><g transform="scale(1)"><path d="M3 9 A7 7 0 0 1 15.5 5 L17.5 3 V9.5 H11 L13.3 7.2 A4.2 4.2 0 0 0 6 9z" fill="#3fbf2a" stroke="#1d7a12" stroke-width="0.6"/><path d="M17 11 A7 7 0 0 1 4.5 15 L2.5 17 V10.5 H9 L6.7 12.8 A4.2 4.2 0 0 0 14 11z" fill="#3fbf2a" stroke="#1d7a12" stroke-width="0.6"/></g></svg><svg class="abs" style="left:1008px;top:68px" width="20" height="20" viewBox="0 0 20 20"><g transform="translate(0 -1)"><path d="M1 8 Q10 -2 19 8 Q10 13 1 8z" fill="#d4dbea" stroke="#4f5a7a" stroke-width="0.8"/><path d="M0.5 6.5 Q10 -3.5 19.5 6.5" fill="none" stroke="#3c4563" stroke-width="1.8"/><circle cx="10" cy="6.6" r="3.8" fill="#46639d"/><circle cx="10" cy="6.6" r="1.7" fill="#0f1730"/><circle cx="8.8" cy="5.4" r="0.9" fill="#dfe8fb"/></g><circle cx="10" cy="13.5" r="5.8" fill="#f7d23a" stroke="#b98c12" stroke-width="0.7"/><circle cx="8" cy="12" r="0.9" fill="#333"/><circle cx="12" cy="12" r="0.9" fill="#333"/><path d="M7 15 q3 2.6 6 0" fill="none" stroke="#333" stroke-width="0.9"/></svg><div class="glabel" style="left:955px">视图</div><svg class="abs" style="left:1042px;top:66px" width="3" height="43"><rect width="3" height="43" fill="url(#gdot)"/></svg><svg class="abs" style="left:1051px;top:68px" width="20" height="20" viewBox="0 0 20 20"><path d="M1 12 L11 7 L19 11 L9 17z" fill="#eef2fa" stroke="#8a93a8" stroke-width="0.7"/><path d="M7 12 V2" stroke="#2a6de0" stroke-width="1.6"/><path d="M7 0 l-2.4 4 h4.8z" fill="#2a6de0"/><path d="M7 12 L16 6.5" stroke="#2eb82e" stroke-width="1.6"/><path d="M18.5 5 l-4.5 0.3 l2.2 3.4z" fill="#2eb82e"/><path d="M7 12 L15 17" stroke="#d62a2a" stroke-width="1.6"/><path d="M17.5 18.5 l-4.4 -0.6 l2.3 -3.3z" fill="#d62a2a"/><circle cx="7" cy="12" r="1.6" fill="#eee" stroke="#555" stroke-width="0.5"/></svg><svg class="abs" style="left:1077px;top:68px" width="20" height="20" viewBox="0 0 20 20"><g transform="translate(5 -2) scale(0.7)"><path d="M1 12 L11 7 L19 11 L9 17z" fill="#eef2fa" stroke="#8a93a8" stroke-width="0.7"/><path d="M7 12 V2" stroke="#2a6de0" stroke-width="1.6"/><path d="M7 0 l-2.4 4 h4.8z" fill="#2a6de0"/><path d="M7 12 L16 6.5" stroke="#2eb82e" stroke-width="1.6"/><path d="M18.5 5 l-4.5 0.3 l2.2 3.4z" fill="#2eb82e"/><path d="M7 12 L15 17" stroke="#d62a2a" stroke-width="1.6"/><path d="M17.5 18.5 l-4.4 -0.6 l2.3 -3.3z" fill="#d62a2a"/><circle cx="7" cy="12" r="1.6" fill="#eee" stroke="#555" stroke-width="0.5"/></g><path d="M2 17 L9 10" stroke="#2eb82e" stroke-width="3"/><path d="M11.5 7.5 l-6 1 l5 5z" fill="#2eb82e"/><rect x="7" y="13" width="11" height="5" fill="#c9ced9" stroke="#666" stroke-width="0.7"/></svg><svg class="abs" style="left:1103px;top:68px" width="20" height="20" viewBox="0 0 20 20"><g transform="translate(6 -2) scale(0.7)"><path d="M1 12 L11 7 L19 11 L9 17z" fill="#eef2fa" stroke="#8a93a8" stroke-width="0.7"/><path d="M7 12 V2" stroke="#2a6de0" stroke-width="1.6"/><path d="M7 0 l-2.4 4 h4.8z" fill="#2a6de0"/><path d="M7 12 L16 6.5" stroke="#2eb82e" stroke-width="1.6"/><path d="M18.5 5 l-4.5 0.3 l2.2 3.4z" fill="#2eb82e"/><path d="M7 12 L15 17" stroke="#d62a2a" stroke-width="1.6"/><path d="M17.5 18.5 l-4.4 -0.6 l2.3 -3.3z" fill="#d62a2a"/><circle cx="7" cy="12" r="1.6" fill="#eee" stroke="#555" stroke-width="0.5"/></g><path d="M1 9 l6 0 l0 -2.5 l5 5 l-5 5 l0 -2.5 l-6 0z" fill="#2eb82e" stroke="#1d7a12" stroke-width="0.6" transform="rotate(40 6 12)"/></svg><div class="glabel" style="left:1089px">工作平面</div><svg class="abs" style="left:1136px;top:66px" width="3" height="43"><rect width="3" height="43" fill="url(#gdot)"/></svg><svg class="abs" style="left:1145px;top:68px" width="20" height="20" viewBox="0 0 20 20"><rect x="1" y="1" width="18" height="18" fill="#333"/><rect x="1.5" y="1.5" width="5.3" height="5.3" fill="#19b8f2"/><rect x="7.35" y="1.5" width="5.3" height="5.3" fill="#f2e219"/><rect x="13.2" y="1.5" width="5.3" height="5.3" fill="#19d419"/><rect x="1.5" y="7.35" width="5.3" height="5.3" fill="#f27c19"/><rect x="7.35" y="7.35" width="5.3" height="5.3" fill="#a86a1a"/><rect x="13.2" y="7.35" width="5.3" height="5.3" fill="#f219d4"/><rect x="1.5" y="13.2" width="5.3" height="5.3" fill="#1932d4"/><rect x="7.35" y="13.2" width="5.3" height="5.3" fill="#19b419"/><rect x="13.2" y="13.2" width="5.3" height="5.3" fill="#8a8a8a"/></svg><svg class="abs" style="left:1171px;top:68px" width="20" height="20" viewBox="0 0 20 20"><rect x="3" y="1" width="14" height="18" fill="#f4f6fb" stroke="#5b7fc4" stroke-width="1"/><rect x="5" y="3" width="10" height="1.6" fill="#f2a019"/><rect x="5" y="6" width="10" height="1.2" fill="#9ab"/><rect x="5" y="9" width="2.6" height="2.6" fill="#19b8f2"/><rect x="8.5" y="9" width="2.6" height="2.6" fill="#f2e219"/><rect x="12" y="9" width="2.6" height="2.6" fill="#19d419"/><rect x="5" y="12.2" width="2.6" height="2.6" fill="#f27c19"/><rect x="8.5" y="12.2" width="2.6" height="2.6" fill="#f219d4"/><rect x="12" y="12.2" width="2.6" height="2.6" fill="#1932d4"/><rect x="5" y="15.4" width="2.6" height="2.6" fill="#d62a2a"/><rect x="8.5" y="15.4" width="2.6" height="2.6" fill="#19b419"/><rect x="12" y="15.4" width="2.6" height="2.6" fill="#8a8a8a"/></svg><svg class="abs" style="left:1197px;top:68px" width="20" height="20" viewBox="0 0 20 20"><circle cx="10" cy="10" r="9" fill="#5e9a3a" stroke="#3a6a20" stroke-width="1"/><circle cx="10" cy="10" r="7" fill="#86b860" opacity="0.6"/><path d="M5 15 L14 6" stroke="#eef0f4" stroke-width="2.4" stroke-linecap="round"/><path d="M15 15 L6 6" stroke="#dfe3ea" stroke-width="2" stroke-linecap="round"/><circle cx="14.5" cy="5.5" r="2" fill="none" stroke="#eef0f4" stroke-width="1.4"/><path d="M4 5 l2.5 -2 l2.5 2.5 l-2.5 2z" fill="#dfe3ea"/></svg><svg class="abs" style="left:1223px;top:68px" width="20" height="20" viewBox="0 0 20 20"><rect x="1" y="1" width="18" height="18" fill="#eef2fa" stroke="#3b5fb0" stroke-width="1"/><rect x="1" y="1" width="18" height="4" fill="#3b6fd0"/><path d="M3 7 h10" stroke="#c9a32a" stroke-width="1.6" stroke-dasharray="1.6 1"/><path d="M4 9 v8" stroke="#c9a32a" stroke-width="1.6" stroke-dasharray="1.6 1"/><path d="M7 17 L16 8" stroke="#8aa0c8" stroke-width="2.2" stroke-linecap="round"/><path d="M17 17 L9 9" stroke="#9ab" stroke-width="1.8" stroke-linecap="round"/></svg><svg class="abs" style="left:1249px;top:68px" width="20" height="20" viewBox="0 0 20 20"><rect x="2" y="3" width="16" height="15" fill="none" stroke="#223" stroke-width="1.2" stroke-dasharray="1.5 1.5"/><path d="M6 9 q3 -5 8 -5 l5 2 l-2 4 l-5 1 l-4 2z" fill="#e9b877" stroke="#8a5a22" stroke-width="0.7"/><path d="M4 14 l2 -2 l2 2 l-2 2z" fill="#f2e219" stroke="#2a4fd0" stroke-width="0.8"/><path d="M6 10.5 v7 M2.5 14 h7" stroke="#2a4fd0" stroke-width="0.9"/></svg><svg class="abs" style="left:1275px;top:68px" width="20" height="20" viewBox="0 0 20 20"><path d="M5 3 L19 1.5 L15 17 L1 18.5z" fill="#e9a5a5" stroke="#2b5fd0" stroke-width="1.6"/><path d="M8.5 2.7 L4.5 18 M12 2.3 L8 17.7 M15.5 1.9 L11.5 17.4 M4 7 L18 5.5 M3 11 L17 9.5 M2 15 L16 13.5" stroke="#c83232" stroke-width="0.8" fill="none"/></svg><div class="glabel" style="left:1222px">系统</div>
<div id="view"><svg class="abs" style="left:0;top:0" width="1860" height="892" viewBox="0 0 1860 892"><defs><linearGradient id="hg" x1="0" x2="1" y1="0" y2="0"><stop offset="0" stop-color="#2f3430"/><stop offset="1" stop-color="#7f8880"/></linearGradient><linearGradient id="hg2" x1="0" x2="1" y1="0" y2="0"><stop offset="0" stop-color="#8b948c"/><stop offset="1" stop-color="#3a3f3b"/></linearGradient><linearGradient id="fl" x1="0" x2="1" y1="0" y2="0"><stop offset="0" stop-color="#4a504b"/><stop offset="0.5" stop-color="#a9b2aa"/><stop offset="1" stop-color="#5a615b"/></linearGradient><linearGradient id="flv" x1="0" x2="0" y1="0" y2="1"><stop offset="0" stop-color="#4a504b"/><stop offset="0.5" stop-color="#aab3ab"/><stop offset="1" stop-color="#889189"/></linearGradient><linearGradient id="fl2" x1="0" x2="1" y1="0" y2="0"><stop offset="0" stop-color="#3e443f"/><stop offset="0.06" stop-color="#9aa39b"/><stop offset="0.5" stop-color="#889189"/><stop offset="0.94" stop-color="#b4bcb5"/><stop offset="1" stop-color="#59605a"/></linearGradient><linearGradient id="flv2" x1="0" x2="0" y1="0" y2="1"><stop offset="0" stop-color="#6b726c"/><stop offset="0.6" stop-color="#a5aea6"/><stop offset="1" stop-color="#8d968e"/></linearGradient><linearGradient id="flh" x1="0" x2="0" y1="0" y2="1"><stop offset="0" stop-color="#5a615b"/><stop offset="0.6" stop-color="#b4bcb5"/><stop offset="1" stop-color="#6a716b"/></linearGradient></defs><polygon points="444.7,349.5 524.4,304.0 575.3,333.5 575.5,381.3 585.6,386.6 587.9,385.5 588.7,378.3 589.4,369.9 594.4,366.8 594.4,358.8 609.6,350.8 609.6,310.5 683.4,267.4 697.0,273.8 705.7,264.7 705.7,199.5 779.6,157.4 812.0,175.4 812.0,138.5 894.3,91.0 976.3,138.0 976.3,175.8 1009.4,157.4 1083.4,199.5 1083.4,265.4 1085.4,269.6 1092.0,274.2 1153.7,240.8 1227.1,282.8 1227.1,321.0 1259.6,302.5 1344.4,350.0 1344.8,466.2 894.5,726.0 444.7,467.0" fill="#889189" stroke="#050605" stroke-width="1.0" stroke-linejoin="round"/><ellipse cx="894.2" cy="349.0" rx="163.0" ry="94.2" fill="#8b948c" stroke="#050605" stroke-width="0.8"/><ellipse cx="894.2" cy="348.0" rx="155.0" ry="89.5" fill="none" stroke="#050605" stroke-width="0.6"/><polyline points="753.2,325.2 736.8,324.6" fill="none" stroke="#050605" stroke-width="0.7" stroke-linejoin="round" stroke-linecap="round"/><polyline points="767.8,304.8 753.0,301.9" fill="none" stroke="#050605" stroke-width="0.7" stroke-linejoin="round" stroke-linecap="round"/><polyline points="821.2,274.0 812.7,267.5" fill="none" stroke="#050605" stroke-width="0.7" stroke-linejoin="round" stroke-linecap="round"/><polyline points="856.4,265.6 852.0,258.1" fill="none" stroke="#050605" stroke-width="0.7" stroke-linejoin="round" stroke-linecap="round"/><polyline points="932.0,265.6 936.4,258.1" fill="none" stroke="#050605" stroke-width="0.7" stroke-linejoin="round" stroke-linecap="round"/><polyline points="967.2,274.0 975.7,267.5" fill="none" stroke="#050605" stroke-width="0.7" stroke-linejoin="round" stroke-linecap="round"/><polyline points="1020.6,304.8 1035.4,301.9" fill="none" stroke="#050605" stroke-width="0.7" stroke-linejoin="round" stroke-linecap="round"/><polyline points="1035.2,325.2 1051.6,324.6" fill="none" stroke="#050605" stroke-width="0.7" stroke-linejoin="round" stroke-linecap="round"/><polyline points="777.6,296.3 764.0,292.4" fill="none" stroke="#050605" stroke-width="0.7" stroke-linejoin="round" stroke-linecap="round"/><polyline points="806.3,279.7 796.1,273.8" fill="none" stroke="#050605" stroke-width="0.7" stroke-linejoin="round" stroke-linecap="round"/><polyline points="873.9,263.5 871.5,255.8" fill="none" stroke="#050605" stroke-width="0.7" stroke-linejoin="round" stroke-linecap="round"/><polyline points="914.5,263.5 916.9,255.8" fill="none" stroke="#050605" stroke-width="0.7" stroke-linejoin="round" stroke-linecap="round"/><polyline points="982.1,279.7 992.3,273.8" fill="none" stroke="#050605" stroke-width="0.7" stroke-linejoin="round" stroke-linecap="round"/><polyline points="1010.8,296.3 1024.4,292.4" fill="none" stroke="#050605" stroke-width="0.7" stroke-linejoin="round" stroke-linecap="round"/><polygon points="812.0,138.5 856.8,165.5 856.8,225.0 812.0,225.0" fill="#757d76" stroke="#050605" stroke-width="1.0" stroke-linejoin="round"/><polygon points="856.8,165.5 931.8,165.5 931.8,225.0 856.8,225.0" fill="#5f6660" stroke="#050605" stroke-width="1.0" stroke-linejoin="round"/><polyline points="859.3,165.5 859.3,225.0" fill="none" stroke="#050605" stroke-width="0.7" stroke-linejoin="round" stroke-linecap="round"/><polyline points="928.8,165.5 928.8,225.0" fill="none" stroke="#050605" stroke-width="0.7" stroke-linejoin="round" stroke-linecap="round"/><polygon points="931.8,165.5 976.3,138.0 976.3,231.0 931.8,225.0" fill="#383d39" stroke="#050605" stroke-width="1.0" stroke-linejoin="round"/><polygon points="894.3,91.0 976.3,138.0 931.8,165.5 856.8,165.5 812.0,138.5" fill="#889189" stroke="#050605" stroke-width="1.0" stroke-linejoin="round"/><ellipse cx="890.0" cy="133.5" rx="24.0" ry="13.5" fill="url(#hg)" stroke="#050605" stroke-width="1.0"/><rect x="845.2" y="222.0" width="97.5" height="29.6" rx="5.5" fill="url(#fl2)" stroke="#050605" stroke-width="1"/><polygon points="845.2,191.0 856.8,191.0 856.8,225.2 851.0,229.0 845.2,231.0" fill="#757d76" stroke="none" stroke-width="1.0" stroke-linejoin="round"/><polygon points="931.8,191.0 942.7,191.0 942.7,231.0 937.0,229.0 931.8,225.2" fill="#383d39" stroke="none" stroke-width="1.0" stroke-linejoin="round"/><polygon points="856.8,191.0 931.8,191.0 931.8,225.2 856.8,225.2" fill="#5f6660" stroke="none" stroke-width="1.0" stroke-linejoin="round"/><polygon points="856.8,225.2 931.8,225.2 931.8,232.3 856.8,232.3" fill="url(#flv2)" stroke="none" stroke-width="1.0" stroke-linejoin="round"/><polyline points="856.8,225.2 931.8,225.2" fill="none" stroke="#050605" stroke-width="1.0" stroke-linejoin="round" stroke-linecap="round"/><polyline points="859.5,165.5 859.5,232.3" fill="none" stroke="#050605" stroke-width="0.8" stroke-linejoin="round" stroke-linecap="round"/><polyline points="928.2,165.5 928.2,232.3" fill="none" stroke="#050605" stroke-width="0.8" stroke-linejoin="round" stroke-linecap="round"/><polyline points="845.2,201.0 845.2,243.0" fill="none" stroke="#050605" stroke-width="1.0" stroke-linejoin="round" stroke-linecap="round"/><polyline points="942.7,201.0 942.7,243.0" fill="none" stroke="#050605" stroke-width="1.0" stroke-linejoin="round" stroke-linecap="round"/><polyline points="845.2,209.0 856.8,215.5" fill="none" stroke="#050605" stroke-width="0.7" stroke-linejoin="round" stroke-linecap="round"/><polyline points="942.7,209.0 931.8,215.5" fill="none" stroke="#050605" stroke-width="0.7" stroke-linejoin="round" stroke-linecap="round"/><rect x="851.3" y="232.3" width="87" height="19.3" rx="4" fill="#889189" stroke="#050605" stroke-width="0.9"/><polygon points="851.3,243.0 938.3,243.0 938.3,249.0 919.4,251.6 919.4,264.0 868.9,264.0 868.9,251.6 851.3,249.0" fill="#889189" stroke="none" stroke-width="1.0" stroke-linejoin="round"/><polyline points="851.3,246.5 938.3,246.5" fill="none" stroke="#050605" stroke-width="0.9" stroke-linejoin="round" stroke-linecap="round"/><polyline points="851.3,241.0 851.3,251.6 868.9,251.6 868.9,264.0" fill="none" stroke="#050605" stroke-width="1.0" stroke-linejoin="round" stroke-linecap="round"/><polyline points="938.3,241.0 938.3,251.6 919.4,251.6 919.4,264.0" fill="none" stroke="#050605" stroke-width="1.0" stroke-linejoin="round" stroke-linecap="round"/><polygon points="705.7,199.5 803.0,256.2 805.6,260.4 791.9,269.8 791.9,287.2 785.0,293.5 705.7,264.7" fill="#757d76" stroke="#050605" stroke-width="1.0" stroke-linejoin="round"/><polygon points="779.6,157.4 845.6,194.1 845.6,250.4 868.0,251.5 868.0,263.0 844.0,258.0 797.0,272.0 791.9,269.8 805.6,260.4 803.0,256.2 705.7,199.5" fill="#889189" stroke="#050605" stroke-width="1.0" stroke-linejoin="round"/><ellipse cx="802.7" cy="226.5" rx="8.1" ry="4.6" fill="url(#hg)" stroke="#050605" stroke-width="1.0"/><polygon points="1009.4,157.4 1083.4,199.5 986.8,257.9 983.5,261.0 996.9,270.0 980.0,277.0 944.0,259.0 919.0,263.0 919.0,251.5 943.1,250.4 943.1,194.1" fill="#889189" stroke="#050605" stroke-width="1.0" stroke-linejoin="round"/><polygon points="1083.4,199.5 986.8,257.9 983.5,261.0 996.9,270.0 996.9,288.0 1008.6,293.8 1083.4,265.4" fill="#383d39" stroke="#050605" stroke-width="1.0" stroke-linejoin="round"/><polygon points="980.0,277.0 996.9,270.0 996.9,288.0" fill="#383d39" stroke="#050605" stroke-width="1.0" stroke-linejoin="round"/><path d="M1045.3 313.7 L1049.8 321.0 L1053.2 328.4 L1055.6 335.9 L1056.9 343.5 L1057.2 351.2 L1056.3 358.8 L1054.4 366.4 L1051.4 373.9 L1047.4 381.2 L1042.3 388.3 L1036.3 395.1 L1029.3 401.6 L1021.5 407.8 L1012.8 413.6 L1003.3 418.9 L993.1 423.8 L982.2 428.2 L970.7 432.1 L958.8 435.4 L946.4 438.2 L933.6 440.3 L920.6 441.9 L907.5 442.8 L894.2 443.1 L880.9 442.8 L867.8 441.9 L854.8 440.3 L842.0 438.2 L829.6 435.4 L817.7 432.1 L806.2 428.2 L795.3 423.8 L785.1 418.9 L775.6 413.6 L766.9 407.8 L759.1 401.6 L752.1 395.1 L746.1 388.3 L741.0 381.2 L737.0 373.9 L734.0 366.4 L732.1 358.8 L731.2 351.2 L731.5 343.5 L732.8 335.9 L735.2 328.4 L738.6 321.0 L743.1 313.7" fill="none" stroke="#050605" stroke-width="0.8" stroke-linejoin="round"/><path d="M1037.9 314.5 L1042.2 321.3 L1045.4 328.4 L1047.7 335.5 L1048.9 342.8 L1049.2 350.1 L1048.4 357.4 L1046.5 364.6 L1043.7 371.7 L1039.9 378.6 L1035.1 385.4 L1029.3 391.8 L1022.7 398.0 L1015.2 403.9 L1006.9 409.4 L997.9 414.5 L988.2 419.2 L977.9 423.3 L967.0 427.0 L955.6 430.2 L943.8 432.8 L931.7 434.8 L919.3 436.3 L906.8 437.2 L894.2 437.5 L881.6 437.2 L869.1 436.3 L856.7 434.8 L844.6 432.8 L832.8 430.2 L821.4 427.0 L810.5 423.3 L800.2 419.2 L790.5 414.5 L781.5 409.4 L773.2 403.9 L765.7 398.0 L759.1 391.8 L753.3 385.4 L748.5 378.6 L744.7 371.7 L741.9 364.6 L740.0 357.4 L739.2 350.1 L739.5 342.8 L740.7 335.5 L743.0 328.4 L746.2 321.3 L750.5 314.5" fill="none" stroke="#050605" stroke-width="0.6" stroke-linejoin="round"/><polyline points="1035.2,325.2 1051.6,324.6" fill="none" stroke="#050605" stroke-width="0.7" stroke-linejoin="round" stroke-linecap="round"/><polyline points="1035.2,368.8 1051.6,373.4" fill="none" stroke="#050605" stroke-width="0.7" stroke-linejoin="round" stroke-linecap="round"/><polyline points="1020.6,389.2 1035.4,396.1" fill="none" stroke="#050605" stroke-width="0.7" stroke-linejoin="round" stroke-linecap="round"/><polyline points="967.2,420.0 975.7,430.5" fill="none" stroke="#050605" stroke-width="0.7" stroke-linejoin="round" stroke-linecap="round"/><polyline points="932.0,428.4 936.4,439.9" fill="none" stroke="#050605" stroke-width="0.7" stroke-linejoin="round" stroke-linecap="round"/><polyline points="856.4,428.4 852.0,439.9" fill="none" stroke="#050605" stroke-width="0.7" stroke-linejoin="round" stroke-linecap="round"/><polyline points="821.2,420.0 812.7,430.5" fill="none" stroke="#050605" stroke-width="0.7" stroke-linejoin="round" stroke-linecap="round"/><polyline points="767.8,389.2 753.0,396.1" fill="none" stroke="#050605" stroke-width="0.7" stroke-linejoin="round" stroke-linecap="round"/><polyline points="753.2,368.8 736.8,373.4" fill="none" stroke="#050605" stroke-width="0.7" stroke-linejoin="round" stroke-linecap="round"/><polyline points="753.2,325.2 736.8,324.6" fill="none" stroke="#050605" stroke-width="0.7" stroke-linejoin="round" stroke-linecap="round"/><polyline points="1038.8,335.3 1055.6,335.9" fill="none" stroke="#050605" stroke-width="0.7" stroke-linejoin="round" stroke-linecap="round"/><polyline points="1038.8,358.7 1055.6,362.1" fill="none" stroke="#050605" stroke-width="0.7" stroke-linejoin="round" stroke-linecap="round"/><polyline points="1010.8,397.7 1024.4,405.6" fill="none" stroke="#050605" stroke-width="0.7" stroke-linejoin="round" stroke-linecap="round"/><polyline points="982.1,414.3 992.3,424.2" fill="none" stroke="#050605" stroke-width="0.7" stroke-linejoin="round" stroke-linecap="round"/><polyline points="914.5,430.5 916.9,442.2" fill="none" stroke="#050605" stroke-width="0.7" stroke-linejoin="round" stroke-linecap="round"/><polyline points="873.9,430.5 871.5,442.2" fill="none" stroke="#050605" stroke-width="0.7" stroke-linejoin="round" stroke-linecap="round"/><polyline points="806.3,414.3 796.1,424.2" fill="none" stroke="#050605" stroke-width="0.7" stroke-linejoin="round" stroke-linecap="round"/><polyline points="777.6,397.7 764.0,405.6" fill="none" stroke="#050605" stroke-width="0.7" stroke-linejoin="round" stroke-linecap="round"/><polyline points="749.6,358.7 732.8,362.1" fill="none" stroke="#050605" stroke-width="0.7" stroke-linejoin="round" stroke-linecap="round"/><polyline points="749.6,335.3 732.8,335.9" fill="none" stroke="#050605" stroke-width="0.7" stroke-linejoin="round" stroke-linecap="round"/><path d="M766.9 389.4 L762.4 384.5 L758.4 379.5 L755.0 374.3 L752.2 369.0 L744.5 371.2 L747.4 376.8 L751.0 382.2 L755.2 387.6 L760.0 392.7 Z" fill="#747c75" stroke="#050605" stroke-width="0.6" stroke-linejoin="round"/><path d="M1036.2 325.0 L1038.4 330.4 L1039.9 335.9 L1040.9 341.4 L1041.2 347.0 L1049.2 348.0 L1048.9 342.1 L1047.9 336.3 L1046.2 330.5 L1043.9 324.8 Z" fill="#747c75" stroke="#050605" stroke-width="0.6" stroke-linejoin="round"/><path d="M1021.5 389.4 L1016.4 394.2 L1010.8 398.7 L1004.7 403.0 L998.1 407.0 L1003.8 411.3 L1010.7 407.0 L1017.2 402.5 L1023.1 397.7 L1028.4 392.7 Z" fill="#747c75" stroke="#050605" stroke-width="0.6" stroke-linejoin="round"/><path d="M868.7 430.6 L859.3 429.4 L850.0 427.9 L840.9 426.1 L832.1 423.9 L828.7 429.1 L838.0 431.4 L847.6 433.4 L857.4 434.9 L867.3 436.1 Z" fill="#747c75" stroke="#050605" stroke-width="0.6" stroke-linejoin="round"/><path d="M967.7 420.5 L959.2 423.1 L950.5 425.4 L941.5 427.4 L932.2 429.0 L934.3 434.4 L944.0 432.7 L953.5 430.7 L962.8 428.3 L971.7 425.5 Z" fill="#747c75" stroke="#050605" stroke-width="0.6" stroke-linejoin="round"/><polygon points="722.5,334.1 752.0,332.9 752.0,360.4 722.5,364.8" fill="#5f6660" stroke="#050605" stroke-width="1.0" stroke-linejoin="round"/><polygon points="1036.0,333.5 1065.5,334.8 1065.5,363.5 1036.0,360.4" fill="#5f6660" stroke="#050605" stroke-width="1.0" stroke-linejoin="round"/><radialGradient id="cg" cx="0.5" cy="0.55" r="0.6"><stop offset="0" stop-color="#a0a9a1"/><stop offset="0.7" stop-color="#8d968e"/><stop offset="1" stop-color="#6a716b"/></radialGradient><linearGradient id="pk" x1="0" x2="1" y1="0" y2="1"><stop offset="0" stop-color="#a3aca4"/><stop offset="0.6" stop-color="#8f9890"/><stop offset="1" stop-color="#727a73"/></linearGradient><ellipse cx="894.2" cy="346.0" rx="145.0" ry="83.7" fill="#5d645e" stroke="#050605" stroke-width="1.3"/><ellipse cx="894.2" cy="346.5" rx="141.5" ry="81.5" fill="none" stroke="#050605" stroke-width="0.8"/><path d="M749.2 346.0 L749.6 339.4 L751.0 332.9 L753.2 326.5 L756.3 320.1 L760.2 314.0 L765.0 308.0 L770.6 302.3 L776.9 296.8 L783.9 291.6 L791.7 286.8 L800.0 282.3 L809.0 278.3 L818.4 274.6 L828.4 271.4 L838.7 268.7 L849.4 266.4 L860.4 264.6 L871.5 263.3 L882.8 262.5 L894.2 262.3 L905.6 262.5 L916.9 263.3 L928.0 264.6 L939.0 266.4 L949.7 268.7 L960.0 271.4 L970.0 274.6 L979.4 278.3 L988.4 282.3 L996.7 286.8 L1004.5 291.6 L1011.5 296.8 L1017.8 302.3 L1023.4 308.0 L1028.2 314.0 L1032.1 320.1 L1035.2 326.5 L1037.4 332.9 L1038.8 339.4 L1039.2 346.0 L1028.2 370.0 L1027.8 363.9 L1026.6 357.9 L1024.5 351.9 L1021.6 346.1 L1018.0 340.4 L1013.6 334.9 L1008.5 329.6 L1002.6 324.5 L996.1 319.8 L989.0 315.3 L981.2 311.2 L973.0 307.4 L964.2 304.0 L955.0 301.1 L945.5 298.5 L935.6 296.4 L925.5 294.8 L915.2 293.6 L904.7 292.9 L894.2 292.6 L883.7 292.9 L873.2 293.6 L862.9 294.8 L852.8 296.4 L842.9 298.5 L833.4 301.1 L824.2 304.0 L815.4 307.4 L807.2 311.2 L799.4 315.3 L792.3 319.8 L785.8 324.5 L779.9 329.6 L774.8 334.9 L770.4 340.4 L766.8 346.1 L763.9 351.9 L761.8 357.9 L760.6 363.9 L760.2 370.0 Z" fill="#69706a" stroke="#050605" stroke-width="0.7" stroke-linejoin="round"/><ellipse cx="894.2" cy="369.0" rx="136.0" ry="70.0" fill="#838c84" stroke="#050605" stroke-width="0.7"/><path d="M761.9 312.8 v22.0 a3.8 5.8 0 0 0 7.5 0 v-22.0 z" fill="#3f4540" stroke="#050605" stroke-width="1"/><path d="M763.9 313.8 v16.0 a1.8 3.8 0 0 0 3.5 0 v-16.0" fill="#8e978f" stroke="#050605" stroke-width="0.7"/><polyline points="763.7,316.8 767.6,316.8" fill="none" stroke="#050605" stroke-width="0.6" stroke-linejoin="round" stroke-linecap="round"/><path d="M813.9 279.0 v22.0 a4.5 6.5 0 0 0 9.0 0 v-22.0 z" fill="#3f4540" stroke="#050605" stroke-width="1"/><path d="M815.9 280.0 v16.0 a2.5 4.5 0 0 0 5.0 0 v-16.0" fill="#8e978f" stroke="#050605" stroke-width="0.7"/><polyline points="815.7,283.0 821.1,283.0" fill="none" stroke="#050605" stroke-width="0.6" stroke-linejoin="round" stroke-linecap="round"/><path d="M851.2 269.4 v22.0 a4.8 6.8 0 0 0 9.5 0 v-22.0 z" fill="#3f4540" stroke="#050605" stroke-width="1"/><path d="M853.2 270.4 v16.0 a2.8 4.8 0 0 0 5.5 0 v-16.0" fill="#8e978f" stroke="#050605" stroke-width="0.7"/><polyline points="853.0,273.4 858.9,273.4" fill="none" stroke="#050605" stroke-width="0.6" stroke-linejoin="round" stroke-linecap="round"/><path d="M927.7 269.4 v22.0 a4.8 6.8 0 0 0 9.5 0 v-22.0 z" fill="#3f4540" stroke="#050605" stroke-width="1"/><path d="M929.7 270.4 v16.0 a2.8 4.8 0 0 0 5.5 0 v-16.0" fill="#8e978f" stroke="#050605" stroke-width="0.7"/><polyline points="929.5,273.4 935.4,273.4" fill="none" stroke="#050605" stroke-width="0.6" stroke-linejoin="round" stroke-linecap="round"/><path d="M965.5 279.0 v22.0 a4.5 6.5 0 0 0 9.0 0 v-22.0 z" fill="#3f4540" stroke="#050605" stroke-width="1"/><path d="M967.5 280.0 v16.0 a2.5 4.5 0 0 0 5.0 0 v-16.0" fill="#8e978f" stroke="#050605" stroke-width="0.7"/><polyline points="967.3,283.0 972.7,283.0" fill="none" stroke="#050605" stroke-width="0.6" stroke-linejoin="round" stroke-linecap="round"/><path d="M1019.0 312.8 v22.0 a3.8 5.8 0 0 0 7.5 0 v-22.0 z" fill="#3f4540" stroke="#050605" stroke-width="1"/><path d="M1021.0 313.8 v16.0 a1.8 3.8 0 0 0 3.5 0 v-16.0" fill="#8e978f" stroke="#050605" stroke-width="0.7"/><polyline points="1020.8,316.8 1024.7,316.8" fill="none" stroke="#050605" stroke-width="0.6" stroke-linejoin="round" stroke-linecap="round"/><clipPath id="cavc"><ellipse cx="894.2" cy="346.0" rx="144.5" ry="83.2"/></clipPath><g clip-path="url(#cavc)"><g><path d="M942.2 370.1 L952.2 368.7 L964.2 369.3 L979.2 369.9 L994.2 370.6 L1009.2 371.3 L1022.2 371.9 L1023.5 376.2 L1021.5 380.1 L1019.0 384.0 L1016.1 387.8 L1012.9 391.5 L1009.2 395.1 L1005.2 398.5 L997.8 400.7 L988.0 396.1 L976.7 390.9 L965.5 385.6 L954.2 380.3 L945.1 376.1 Z" fill="url(#pk)" stroke="#050605" stroke-width="1.3" stroke-linejoin="round"/><path d="M964.2 371.4 L979.2 372.1 L994.2 372.8 L1009.2 373.4 L1019.5 378.0 L1017.7 381.1 L1015.7 384.2 L1013.4 387.2 L1010.8 390.1 L1008.0 393.0 L1004.9 395.8 L990.9 394.6 L979.6 389.4 L968.3 384.1 L957.0 378.8" fill="none" stroke="#050605" stroke-width="0.9" stroke-linejoin="round"/><path d="M964.2 373.0 L979.2 373.7 L994.2 374.3 L1009.2 375.0 L1015.9 378.8 L1014.4 381.4 L1012.6 384.0 L1010.6 386.5 L1008.5 389.0 L1006.1 391.5 L1003.6 393.9 L993.0 393.5 L981.7 388.2 L970.4 382.9 L959.1 377.7" fill="none" stroke="#050605" stroke-width="0.8" stroke-linejoin="round"/><path d="M964.2 374.6 L979.2 375.3 L994.2 375.9 L1009.2 376.6 L1011.4 379.3 L1010.1 381.4 L1008.6 383.6 L1007.0 385.7 L1005.2 387.7 L1003.3 389.7 L1001.3 391.7 L995.1 392.4 L983.8 387.1 L972.5 381.8 L961.2 376.5" fill="none" stroke="#050605" stroke-width="0.6" stroke-linejoin="round"/><path d="M914.1 385.1 L925.3 386.6 L933.2 391.4 L943.2 397.4 L953.1 403.5 L963.0 409.5 L971.6 414.7 L967.5 418.6 L961.0 420.8 L954.2 422.7 L947.3 424.4 L940.2 426.0 L932.9 427.3 L925.5 428.3 L917.4 427.7 L916.3 420.7 L915.1 412.8 L913.8 404.8 L912.6 396.8 L911.5 390.4 Z" fill="url(#pk)" stroke="#050605" stroke-width="1.3" stroke-linejoin="round"/><path d="M930.4 392.9 L940.3 399.0 L950.3 405.0 L960.2 411.0 L962.4 418.5 L957.1 420.1 L951.7 421.6 L946.2 423.0 L940.5 424.2 L934.8 425.3 L928.9 426.2 L920.3 420.7 L919.1 412.8 L917.8 404.8 L916.6 396.8" fill="none" stroke="#050605" stroke-width="0.9" stroke-linejoin="round"/><path d="M928.3 394.1 L938.2 400.1 L948.1 406.1 L958.1 412.1 L958.7 417.7 L954.2 419.1 L949.6 420.4 L944.9 421.5 L940.2 422.6 L935.3 423.5 L930.4 424.3 L923.3 420.7 L922.1 412.8 L920.8 404.8 L919.6 396.8" fill="none" stroke="#050605" stroke-width="0.8" stroke-linejoin="round"/><path d="M926.2 395.2 L936.1 401.2 L946.0 407.2 L955.9 413.2 L954.7 416.5 L951.0 417.6 L947.2 418.6 L943.3 419.6 L939.4 420.4 L935.4 421.2 L931.4 421.9 L926.3 420.7 L925.1 412.8 L923.8 404.8 L922.6 396.8" fill="none" stroke="#050605" stroke-width="0.6" stroke-linejoin="round"/><path d="M874.3 385.1 L876.9 390.4 L875.8 396.8 L874.6 404.8 L873.3 412.8 L872.1 420.7 L871.0 427.7 L862.9 428.3 L855.5 427.3 L848.2 426.0 L841.1 424.4 L834.2 422.7 L827.4 420.8 L820.9 418.6 L816.8 414.7 L825.4 409.5 L835.3 403.5 L845.2 397.4 L855.2 391.4 L863.1 386.6 Z" fill="url(#pk)" stroke="#050605" stroke-width="1.3" stroke-linejoin="round"/><path d="M871.8 396.8 L870.6 404.8 L869.3 412.8 L868.1 420.7 L859.5 426.2 L853.6 425.3 L847.9 424.2 L842.2 423.0 L836.7 421.6 L831.3 420.1 L826.0 418.5 L828.2 411.0 L838.1 405.0 L848.1 399.0 L858.0 392.9" fill="none" stroke="#050605" stroke-width="0.9" stroke-linejoin="round"/><path d="M868.8 396.8 L867.6 404.8 L866.3 412.8 L865.1 420.7 L858.0 424.3 L853.1 423.5 L848.2 422.6 L843.5 421.5 L838.8 420.4 L834.2 419.1 L829.7 417.7 L830.3 412.1 L840.3 406.1 L850.2 400.1 L860.1 394.1" fill="none" stroke="#050605" stroke-width="0.8" stroke-linejoin="round"/><path d="M865.8 396.8 L864.6 404.8 L863.3 412.8 L862.1 420.7 L857.0 421.9 L853.0 421.2 L849.0 420.4 L845.1 419.6 L841.2 418.6 L837.4 417.6 L833.7 416.5 L832.5 413.2 L842.4 407.2 L852.3 401.2 L862.2 395.2" fill="none" stroke="#050605" stroke-width="0.6" stroke-linejoin="round"/><path d="M846.2 370.1 L843.3 376.1 L834.2 380.3 L822.9 385.6 L811.7 390.9 L800.4 396.1 L790.6 400.7 L783.2 398.5 L779.2 395.1 L775.5 391.5 L772.3 387.8 L769.4 384.0 L766.9 380.1 L764.9 376.2 L766.2 371.9 L779.2 371.3 L794.2 370.6 L809.2 369.9 L824.2 369.3 L836.2 368.7 Z" fill="url(#pk)" stroke="#050605" stroke-width="1.3" stroke-linejoin="round"/><path d="M831.4 378.8 L820.1 384.1 L808.8 389.4 L797.5 394.6 L783.5 395.8 L780.4 393.0 L777.6 390.1 L775.0 387.2 L772.7 384.2 L770.7 381.1 L768.9 378.0 L779.2 373.4 L794.2 372.8 L809.2 372.1 L824.2 371.4" fill="none" stroke="#050605" stroke-width="0.9" stroke-linejoin="round"/><path d="M829.3 377.7 L818.0 382.9 L806.7 388.2 L795.4 393.5 L784.8 393.9 L782.3 391.5 L779.9 389.0 L777.8 386.5 L775.8 384.0 L774.0 381.4 L772.5 378.8 L779.2 375.0 L794.2 374.3 L809.2 373.7 L824.2 373.0" fill="none" stroke="#050605" stroke-width="0.8" stroke-linejoin="round"/><path d="M827.2 376.5 L815.9 381.8 L804.6 387.1 L793.3 392.4 L787.1 391.7 L785.1 389.7 L783.2 387.7 L781.4 385.7 L779.8 383.6 L778.3 381.4 L777.0 379.3 L779.2 376.6 L794.2 375.9 L809.2 375.3 L824.2 374.6" fill="none" stroke="#050605" stroke-width="0.6" stroke-linejoin="round"/><path d="M846.2 348.9 L836.2 350.3 L824.2 349.7 L809.2 349.1 L794.2 348.4 L779.2 347.7 L766.2 347.1 L764.9 342.8 L766.9 338.9 L769.4 335.0 L772.3 331.2 L775.5 327.5 L779.2 323.9 L783.2 320.5 L790.6 318.3 L800.4 322.9 L811.7 328.1 L822.9 333.4 L834.2 338.7 L843.3 342.9 Z" fill="url(#pk)" stroke="#050605" stroke-width="1.3" stroke-linejoin="round"/><path d="M824.2 347.6 L809.2 346.9 L794.2 346.2 L779.2 345.6 L768.9 341.0 L770.7 337.9 L772.7 334.8 L775.0 331.8 L777.6 328.9 L780.4 326.0 L783.5 323.2 L797.5 324.4 L808.8 329.6 L820.1 334.9 L831.4 340.2" fill="none" stroke="#050605" stroke-width="0.9" stroke-linejoin="round"/><path d="M824.2 346.0 L809.2 345.3 L794.2 344.7 L779.2 344.0 L772.5 340.2 L774.0 337.6 L775.8 335.0 L777.8 332.5 L779.9 330.0 L782.3 327.5 L784.8 325.1 L795.4 325.5 L806.7 330.8 L818.0 336.1 L829.3 341.3" fill="none" stroke="#050605" stroke-width="0.8" stroke-linejoin="round"/><path d="M824.2 344.4 L809.2 343.7 L794.2 343.1 L779.2 342.4 L777.0 339.7 L778.3 337.6 L779.8 335.4 L781.4 333.3 L783.2 331.3 L785.1 329.3 L787.1 327.3 L793.3 326.6 L804.6 331.9 L815.9 337.2 L827.2 342.5" fill="none" stroke="#050605" stroke-width="0.6" stroke-linejoin="round"/><path d="M874.3 333.9 L863.1 332.4 L855.2 327.6 L845.2 321.6 L835.3 315.5 L825.4 309.5 L816.8 304.3 L820.9 300.4 L827.4 298.2 L834.2 296.3 L841.1 294.6 L848.2 293.0 L855.5 291.7 L862.9 290.7 L871.0 291.3 L872.1 298.3 L873.3 306.2 L874.6 314.2 L875.8 322.2 L876.9 328.6 Z" fill="url(#pk)" stroke="#050605" stroke-width="1.3" stroke-linejoin="round"/><path d="M858.0 326.1 L848.1 320.0 L838.1 314.0 L828.2 308.0 L826.0 300.5 L831.3 298.9 L836.7 297.4 L842.2 296.0 L847.9 294.8 L853.6 293.7 L859.5 292.8 L868.1 298.3 L869.3 306.2 L870.6 314.2 L871.8 322.2" fill="none" stroke="#050605" stroke-width="0.9" stroke-linejoin="round"/><path d="M860.1 324.9 L850.2 318.9 L840.3 312.9 L830.3 306.9 L829.7 301.3 L834.2 299.9 L838.8 298.6 L843.5 297.5 L848.2 296.4 L853.1 295.5 L858.0 294.7 L865.1 298.3 L866.3 306.2 L867.6 314.2 L868.8 322.2" fill="none" stroke="#050605" stroke-width="0.8" stroke-linejoin="round"/><path d="M862.2 323.8 L852.3 317.8 L842.4 311.8 L832.5 305.8 L833.7 302.5 L837.4 301.4 L841.2 300.4 L845.1 299.4 L849.0 298.6 L853.0 297.8 L857.0 297.1 L862.1 298.3 L863.3 306.2 L864.6 314.2 L865.8 322.2" fill="none" stroke="#050605" stroke-width="0.6" stroke-linejoin="round"/><path d="M914.1 333.9 L911.5 328.6 L912.6 322.2 L913.8 314.2 L915.1 306.2 L916.3 298.3 L917.4 291.3 L925.5 290.7 L932.9 291.7 L940.2 293.0 L947.3 294.6 L954.2 296.3 L961.0 298.2 L967.5 300.4 L971.6 304.3 L963.0 309.5 L953.1 315.5 L943.2 321.6 L933.2 327.6 L925.3 332.4 Z" fill="url(#pk)" stroke="#050605" stroke-width="1.3" stroke-linejoin="round"/><path d="M916.6 322.2 L917.8 314.2 L919.1 306.2 L920.3 298.3 L928.9 292.8 L934.8 293.7 L940.5 294.8 L946.2 296.0 L951.7 297.4 L957.1 298.9 L962.4 300.5 L960.2 308.0 L950.3 314.0 L940.3 320.0 L930.4 326.1" fill="none" stroke="#050605" stroke-width="0.9" stroke-linejoin="round"/><path d="M919.6 322.2 L920.8 314.2 L922.1 306.2 L923.3 298.3 L930.4 294.7 L935.3 295.5 L940.2 296.4 L944.9 297.5 L949.6 298.6 L954.2 299.9 L958.7 301.3 L958.1 306.9 L948.1 312.9 L938.2 318.9 L928.3 324.9" fill="none" stroke="#050605" stroke-width="0.8" stroke-linejoin="round"/><path d="M922.6 322.2 L923.8 314.2 L925.1 306.2 L926.3 298.3 L931.4 297.1 L935.4 297.8 L939.4 298.6 L943.3 299.4 L947.2 300.4 L951.0 301.4 L954.7 302.5 L955.9 305.8 L946.0 311.8 L936.1 317.8 L926.2 323.8" fill="none" stroke="#050605" stroke-width="0.6" stroke-linejoin="round"/><path d="M942.2 348.9 L945.1 342.9 L954.2 338.7 L965.5 333.4 L976.7 328.1 L988.0 322.9 L997.8 318.3 L1005.2 320.5 L1009.2 323.9 L1012.9 327.5 L1016.1 331.2 L1019.0 335.0 L1021.5 338.9 L1023.5 342.8 L1022.2 347.1 L1009.2 347.7 L994.2 348.4 L979.2 349.1 L964.2 349.7 L952.2 350.3 Z" fill="url(#pk)" stroke="#050605" stroke-width="1.3" stroke-linejoin="round"/><path d="M957.0 340.2 L968.3 334.9 L979.6 329.6 L990.9 324.4 L1004.9 323.2 L1008.0 326.0 L1010.8 328.9 L1013.4 331.8 L1015.7 334.8 L1017.7 337.9 L1019.5 341.0 L1009.2 345.6 L994.2 346.2 L979.2 346.9 L964.2 347.6" fill="none" stroke="#050605" stroke-width="0.9" stroke-linejoin="round"/><path d="M959.1 341.3 L970.4 336.1 L981.7 330.8 L993.0 325.5 L1003.6 325.1 L1006.1 327.5 L1008.5 330.0 L1010.6 332.5 L1012.6 335.0 L1014.4 337.6 L1015.9 340.2 L1009.2 344.0 L994.2 344.7 L979.2 345.3 L964.2 346.0" fill="none" stroke="#050605" stroke-width="0.8" stroke-linejoin="round"/><path d="M961.2 342.5 L972.5 337.2 L983.8 331.9 L995.1 326.6 L1001.3 327.3 L1003.3 329.3 L1005.2 331.3 L1007.0 333.3 L1008.6 335.4 L1010.1 337.6 L1011.4 339.7 L1009.2 342.4 L994.2 343.1 L979.2 343.7 L964.2 344.4" fill="none" stroke="#050605" stroke-width="0.6" stroke-linejoin="round"/></g></g><g clip-path="url(#cavc)"><polygon points="934.2,353.7 1038.2,358.8 1038.2,364.3 934.2,356.2" fill="#596059" stroke="#050605" stroke-width="0.7" stroke-linejoin="round"/><polygon points="934.2,338.3 1038.2,333.2 1038.2,338.7 934.2,340.8" fill="#596059" stroke="#050605" stroke-width="0.7" stroke-linejoin="round"/><polygon points="915.2,366.6 984.0,411.8 984.0,417.3 915.2,369.1" fill="#596059" stroke="#050605" stroke-width="0.7" stroke-linejoin="round"/><polygon points="929.8,358.1 1008.1,397.8 1008.1,403.3 929.8,360.6" fill="#596059" stroke="#050605" stroke-width="0.7" stroke-linejoin="round"/><polygon points="880.9,369.1 872.1,429.1 872.1,434.6 880.9,371.6" fill="#596059" stroke="#050605" stroke-width="0.7" stroke-linejoin="round"/><polygon points="907.5,369.1 916.3,429.1 916.3,434.6 907.5,371.6" fill="#596059" stroke="#050605" stroke-width="0.7" stroke-linejoin="round"/><polygon points="858.6,358.1 780.3,397.8 780.3,403.3 858.6,360.6" fill="#596059" stroke="#050605" stroke-width="0.7" stroke-linejoin="round"/><polygon points="873.2,366.6 804.4,411.8 804.4,417.3 873.2,369.1" fill="#596059" stroke="#050605" stroke-width="0.7" stroke-linejoin="round"/><polygon points="854.2,338.3 750.2,333.2 750.2,338.7 854.2,340.8" fill="#596059" stroke="#050605" stroke-width="0.7" stroke-linejoin="round"/><polygon points="854.2,353.7 750.2,358.8 750.2,364.3 854.2,356.2" fill="#596059" stroke="#050605" stroke-width="0.7" stroke-linejoin="round"/><polygon points="873.2,325.4 804.4,280.2 804.4,285.7 873.2,327.9" fill="#596059" stroke="#050605" stroke-width="0.7" stroke-linejoin="round"/><polygon points="858.6,333.9 780.3,294.2 780.3,299.7 858.6,336.4" fill="#596059" stroke="#050605" stroke-width="0.7" stroke-linejoin="round"/><polygon points="907.5,322.9 916.3,262.9 916.3,268.4 907.5,325.4" fill="#596059" stroke="#050605" stroke-width="0.7" stroke-linejoin="round"/><polygon points="880.9,322.9 872.1,262.9 872.1,268.4 880.9,325.4" fill="#596059" stroke="#050605" stroke-width="0.7" stroke-linejoin="round"/><polygon points="929.8,333.9 1008.1,294.2 1008.1,299.7 929.8,336.4" fill="#596059" stroke="#050605" stroke-width="0.7" stroke-linejoin="round"/><polygon points="915.2,325.4 984.0,280.2 984.0,285.7 915.2,327.9" fill="#596059" stroke="#050605" stroke-width="0.7" stroke-linejoin="round"/></g><polygon points="934.2,353.7 1038.2,358.8 1038.2,333.2 934.2,338.3" fill="#949d95" stroke="#050605" stroke-width="1.3" stroke-linejoin="round"/><polyline points="938.2,348.3 1038.2,349.8" fill="none" stroke="#050605" stroke-width="0.7" stroke-linejoin="round" stroke-linecap="round"/><polyline points="938.2,343.7 1038.2,342.2" fill="none" stroke="#050605" stroke-width="0.7" stroke-linejoin="round" stroke-linecap="round"/><polyline points="938.2,350.0 1038.2,352.6" fill="none" stroke="#050605" stroke-width="0.9" stroke-linejoin="round" stroke-linecap="round"/><polyline points="938.2,342.0 1038.2,339.4" fill="none" stroke="#050605" stroke-width="0.9" stroke-linejoin="round" stroke-linecap="round"/><polyline points="938.2,351.5 1038.2,355.2" fill="none" stroke="#050605" stroke-width="0.7" stroke-linejoin="round" stroke-linecap="round"/><polyline points="938.2,340.5 1038.2,336.8" fill="none" stroke="#050605" stroke-width="0.7" stroke-linejoin="round" stroke-linecap="round"/><polyline points="938.2,352.7 1038.2,357.1" fill="none" stroke="#050605" stroke-width="0.8" stroke-linejoin="round" stroke-linecap="round"/><polyline points="938.2,339.3 1038.2,334.9" fill="none" stroke="#050605" stroke-width="0.8" stroke-linejoin="round" stroke-linecap="round"/><polygon points="915.2,366.6 984.0,411.8 1008.1,397.8 929.8,358.1" fill="#949d95" stroke="#050605" stroke-width="1.3" stroke-linejoin="round"/><polyline points="923.1,365.2 992.4,406.9" fill="none" stroke="#050605" stroke-width="0.7" stroke-linejoin="round" stroke-linecap="round"/><polyline points="927.5,362.7 999.6,402.7" fill="none" stroke="#050605" stroke-width="0.7" stroke-linejoin="round" stroke-linecap="round"/><polyline points="921.5,366.2 989.7,408.4" fill="none" stroke="#050605" stroke-width="0.9" stroke-linejoin="round" stroke-linecap="round"/><polyline points="929.1,361.8 1002.3,401.2" fill="none" stroke="#050605" stroke-width="0.9" stroke-linejoin="round" stroke-linecap="round"/><polyline points="920.0,367.0 987.3,409.8" fill="none" stroke="#050605" stroke-width="0.7" stroke-linejoin="round" stroke-linecap="round"/><polyline points="930.6,360.9 1004.7,399.8" fill="none" stroke="#050605" stroke-width="0.7" stroke-linejoin="round" stroke-linecap="round"/><polyline points="918.9,367.6 985.5,410.9" fill="none" stroke="#050605" stroke-width="0.8" stroke-linejoin="round" stroke-linecap="round"/><polyline points="931.7,360.3 1006.5,398.7" fill="none" stroke="#050605" stroke-width="0.8" stroke-linejoin="round" stroke-linecap="round"/><polygon points="880.9,369.1 872.1,429.1 916.3,429.1 907.5,369.1" fill="#949d95" stroke="#050605" stroke-width="1.3" stroke-linejoin="round"/><polyline points="890.2,371.4 887.6,429.1" fill="none" stroke="#050605" stroke-width="0.7" stroke-linejoin="round" stroke-linecap="round"/><polyline points="898.2,371.4 900.8,429.1" fill="none" stroke="#050605" stroke-width="0.7" stroke-linejoin="round" stroke-linecap="round"/><polyline points="887.3,371.4 882.7,429.1" fill="none" stroke="#050605" stroke-width="0.9" stroke-linejoin="round" stroke-linecap="round"/><polyline points="901.1,371.4 905.7,429.1" fill="none" stroke="#050605" stroke-width="0.9" stroke-linejoin="round" stroke-linecap="round"/><polyline points="884.6,371.4 878.3,429.1" fill="none" stroke="#050605" stroke-width="0.7" stroke-linejoin="round" stroke-linecap="round"/><polyline points="903.8,371.4 910.1,429.1" fill="none" stroke="#050605" stroke-width="0.7" stroke-linejoin="round" stroke-linecap="round"/><polyline points="882.6,371.4 875.0,429.1" fill="none" stroke="#050605" stroke-width="0.8" stroke-linejoin="round" stroke-linecap="round"/><polyline points="905.8,371.4 913.4,429.1" fill="none" stroke="#050605" stroke-width="0.8" stroke-linejoin="round" stroke-linecap="round"/><polygon points="858.6,358.1 780.3,397.8 804.4,411.8 873.2,366.6" fill="#949d95" stroke="#050605" stroke-width="1.3" stroke-linejoin="round"/><polyline points="860.9,362.7 788.8,402.7" fill="none" stroke="#050605" stroke-width="0.7" stroke-linejoin="round" stroke-linecap="round"/><polyline points="865.3,365.2 796.0,406.9" fill="none" stroke="#050605" stroke-width="0.7" stroke-linejoin="round" stroke-linecap="round"/><polyline points="859.3,361.8 786.1,401.2" fill="none" stroke="#050605" stroke-width="0.9" stroke-linejoin="round" stroke-linecap="round"/><polyline points="866.9,366.2 798.7,408.4" fill="none" stroke="#050605" stroke-width="0.9" stroke-linejoin="round" stroke-linecap="round"/><polyline points="857.8,360.9 783.7,399.8" fill="none" stroke="#050605" stroke-width="0.7" stroke-linejoin="round" stroke-linecap="round"/><polyline points="868.4,367.0 801.1,409.8" fill="none" stroke="#050605" stroke-width="0.7" stroke-linejoin="round" stroke-linecap="round"/><polyline points="856.7,360.3 781.9,398.7" fill="none" stroke="#050605" stroke-width="0.8" stroke-linejoin="round" stroke-linecap="round"/><polyline points="869.5,367.6 802.9,410.9" fill="none" stroke="#050605" stroke-width="0.8" stroke-linejoin="round" stroke-linecap="round"/><polygon points="854.2,338.3 750.2,333.2 750.2,358.8 854.2,353.7" fill="#949d95" stroke="#050605" stroke-width="1.3" stroke-linejoin="round"/><polyline points="850.2,343.7 750.2,342.2" fill="none" stroke="#050605" stroke-width="0.7" stroke-linejoin="round" stroke-linecap="round"/><polyline points="850.2,348.3 750.2,349.8" fill="none" stroke="#050605" stroke-width="0.7" stroke-linejoin="round" stroke-linecap="round"/><polyline points="850.2,342.0 750.2,339.4" fill="none" stroke="#050605" stroke-width="0.9" stroke-linejoin="round" stroke-linecap="round"/><polyline points="850.2,350.0 750.2,352.6" fill="none" stroke="#050605" stroke-width="0.9" stroke-linejoin="round" stroke-linecap="round"/><polyline points="850.2,340.5 750.2,336.8" fill="none" stroke="#050605" stroke-width="0.7" stroke-linejoin="round" stroke-linecap="round"/><polyline points="850.2,351.5 750.2,355.2" fill="none" stroke="#050605" stroke-width="0.7" stroke-linejoin="round" stroke-linecap="round"/><polyline points="850.2,339.3 750.2,334.9" fill="none" stroke="#050605" stroke-width="0.8" stroke-linejoin="round" stroke-linecap="round"/><polyline points="850.2,352.7 750.2,357.1" fill="none" stroke="#050605" stroke-width="0.8" stroke-linejoin="round" stroke-linecap="round"/><polygon points="873.2,325.4 804.4,280.2 780.3,294.2 858.6,333.9" fill="#949d95" stroke="#050605" stroke-width="1.3" stroke-linejoin="round"/><polyline points="865.3,326.8 796.0,285.1" fill="none" stroke="#050605" stroke-width="0.7" stroke-linejoin="round" stroke-linecap="round"/><polyline points="860.9,329.3 788.8,289.3" fill="none" stroke="#050605" stroke-width="0.7" stroke-linejoin="round" stroke-linecap="round"/><polyline points="866.9,325.8 798.7,283.6" fill="none" stroke="#050605" stroke-width="0.9" stroke-linejoin="round" stroke-linecap="round"/><polyline points="859.3,330.2 786.1,290.8" fill="none" stroke="#050605" stroke-width="0.9" stroke-linejoin="round" stroke-linecap="round"/><polyline points="868.4,325.0 801.1,282.2" fill="none" stroke="#050605" stroke-width="0.7" stroke-linejoin="round" stroke-linecap="round"/><polyline points="857.8,331.1 783.7,292.2" fill="none" stroke="#050605" stroke-width="0.7" stroke-linejoin="round" stroke-linecap="round"/><polyline points="869.5,324.4 802.9,281.1" fill="none" stroke="#050605" stroke-width="0.8" stroke-linejoin="round" stroke-linecap="round"/><polyline points="856.7,331.7 781.9,293.3" fill="none" stroke="#050605" stroke-width="0.8" stroke-linejoin="round" stroke-linecap="round"/><polygon points="907.5,322.9 916.3,262.9 872.1,262.9 880.9,322.9" fill="#949d95" stroke="#050605" stroke-width="1.3" stroke-linejoin="round"/><polyline points="898.2,320.6 900.8,262.9" fill="none" stroke="#050605" stroke-width="0.7" stroke-linejoin="round" stroke-linecap="round"/><polyline points="890.2,320.6 887.6,262.9" fill="none" stroke="#050605" stroke-width="0.7" stroke-linejoin="round" stroke-linecap="round"/><polyline points="901.1,320.6 905.7,262.9" fill="none" stroke="#050605" stroke-width="0.9" stroke-linejoin="round" stroke-linecap="round"/><polyline points="887.3,320.6 882.7,262.9" fill="none" stroke="#050605" stroke-width="0.9" stroke-linejoin="round" stroke-linecap="round"/><polyline points="903.8,320.6 910.1,262.9" fill="none" stroke="#050605" stroke-width="0.7" stroke-linejoin="round" stroke-linecap="round"/><polyline points="884.6,320.6 878.3,262.9" fill="none" stroke="#050605" stroke-width="0.7" stroke-linejoin="round" stroke-linecap="round"/><polyline points="905.8,320.6 913.4,262.9" fill="none" stroke="#050605" stroke-width="0.8" stroke-linejoin="round" stroke-linecap="round"/><polyline points="882.6,320.6 875.0,262.9" fill="none" stroke="#050605" stroke-width="0.8" stroke-linejoin="round" stroke-linecap="round"/><polygon points="929.8,333.9 1008.1,294.2 984.0,280.2 915.2,325.4" fill="#949d95" stroke="#050605" stroke-width="1.3" stroke-linejoin="round"/><polyline points="927.5,329.3 999.6,289.3" fill="none" stroke="#050605" stroke-width="0.7" stroke-linejoin="round" stroke-linecap="round"/><polyline points="923.1,326.8 992.4,285.1" fill="none" stroke="#050605" stroke-width="0.7" stroke-linejoin="round" stroke-linecap="round"/><polyline points="929.1,330.2 1002.3,290.8" fill="none" stroke="#050605" stroke-width="0.9" stroke-linejoin="round" stroke-linecap="round"/><polyline points="921.5,325.8 989.7,283.6" fill="none" stroke="#050605" stroke-width="0.9" stroke-linejoin="round" stroke-linecap="round"/><polyline points="930.6,331.1 1004.7,292.2" fill="none" stroke="#050605" stroke-width="0.7" stroke-linejoin="round" stroke-linecap="round"/><polyline points="920.0,325.0 987.3,282.2" fill="none" stroke="#050605" stroke-width="0.7" stroke-linejoin="round" stroke-linecap="round"/><polyline points="931.7,331.7 1006.5,293.3" fill="none" stroke="#050605" stroke-width="0.8" stroke-linejoin="round" stroke-linecap="round"/><polyline points="918.9,324.4 985.5,281.1" fill="none" stroke="#050605" stroke-width="0.8" stroke-linejoin="round" stroke-linecap="round"/><polyline points="846.2,351.2 752.2,355.8" fill="none" stroke="#050605" stroke-width="1.4" stroke-linejoin="round" stroke-linecap="round" stroke-dasharray="3 2"/><polyline points="942.2,351.2 1036.2,355.8" fill="none" stroke="#050605" stroke-width="1.4" stroke-linejoin="round" stroke-linecap="round" stroke-dasharray="3 2"/><ellipse cx="777.5" cy="346.6" rx="7.2" ry="4.3" fill="url(#hg)" stroke="#050605" stroke-width="1.0"/><ellipse cx="1009.9" cy="338.6" rx="7.2" ry="4.3" fill="url(#hg)" stroke="#050605" stroke-width="1.0"/><ellipse cx="898.9" cy="276.8" rx="7.2" ry="4.3" fill="url(#hg)" stroke="#050605" stroke-width="1.0"/><ellipse cx="883.3" cy="409.3" rx="7.2" ry="4.3" fill="url(#hg)" stroke="#050605" stroke-width="1.0"/><ellipse cx="812.3" cy="291.7" rx="7.2" ry="4.3" fill="url(#hg)" stroke="#050605" stroke-width="1.0"/><ellipse cx="842.3" cy="310.0" rx="7.2" ry="4.3" fill="url(#hg)" stroke="#050605" stroke-width="1.0"/><ellipse cx="971.0" cy="291.7" rx="7.2" ry="4.3" fill="url(#hg)" stroke="#050605" stroke-width="1.0"/><ellipse cx="943.5" cy="310.0" rx="7.2" ry="4.3" fill="url(#hg)" stroke="#050605" stroke-width="1.0"/><ellipse cx="842.8" cy="369.5" rx="7.2" ry="4.3" fill="url(#hg)" stroke="#050605" stroke-width="1.0"/><ellipse cx="806.2" cy="387.8" rx="7.2" ry="4.3" fill="url(#hg)" stroke="#050605" stroke-width="1.0"/><ellipse cx="945.8" cy="369.5" rx="7.2" ry="4.3" fill="url(#hg)" stroke="#050605" stroke-width="1.0"/><ellipse cx="983.6" cy="389.0" rx="7.2" ry="4.3" fill="url(#hg)" stroke="#050605" stroke-width="1.0"/><ellipse cx="894.2" cy="344.5" rx="46.0" ry="27.0" fill="#4f5650" stroke="#050605" stroke-width="1.0"/><ellipse cx="894.2" cy="343.5" rx="44.5" ry="26.0" fill="#79817a" stroke="#050605" stroke-width="1.2"/><ellipse cx="894.2" cy="343.0" rx="40.0" ry="23.3" fill="#8a938b" stroke="#050605" stroke-width="0.9"/><polyline points="919.2,342.5 933.2,343.0" fill="none" stroke="#050605" stroke-width="0.9" stroke-linejoin="round" stroke-linecap="round"/><polyline points="918.3,346.2 931.9,348.8" fill="none" stroke="#050605" stroke-width="0.9" stroke-linejoin="round" stroke-linecap="round"/><polyline points="915.9,349.7 928.0,354.3" fill="none" stroke="#050605" stroke-width="0.9" stroke-linejoin="round" stroke-linecap="round"/><polyline points="911.9,352.7 921.8,358.9" fill="none" stroke="#050605" stroke-width="0.9" stroke-linejoin="round" stroke-linecap="round"/><polyline points="906.7,355.0 913.7,362.5" fill="none" stroke="#050605" stroke-width="0.9" stroke-linejoin="round" stroke-linecap="round"/><polyline points="900.7,356.4 904.3,364.8" fill="none" stroke="#050605" stroke-width="0.9" stroke-linejoin="round" stroke-linecap="round"/><polyline points="894.2,356.9 894.2,365.5" fill="none" stroke="#050605" stroke-width="0.9" stroke-linejoin="round" stroke-linecap="round"/><polyline points="887.7,356.4 884.1,364.8" fill="none" stroke="#050605" stroke-width="0.9" stroke-linejoin="round" stroke-linecap="round"/><polyline points="881.7,355.0 874.7,362.5" fill="none" stroke="#050605" stroke-width="0.9" stroke-linejoin="round" stroke-linecap="round"/><polyline points="876.5,352.7 866.6,358.9" fill="none" stroke="#050605" stroke-width="0.9" stroke-linejoin="round" stroke-linecap="round"/><polyline points="872.5,349.7 860.4,354.3" fill="none" stroke="#050605" stroke-width="0.9" stroke-linejoin="round" stroke-linecap="round"/><polyline points="870.1,346.2 856.5,348.8" fill="none" stroke="#050605" stroke-width="0.9" stroke-linejoin="round" stroke-linecap="round"/><polyline points="869.2,342.5 855.2,343.0" fill="none" stroke="#050605" stroke-width="0.9" stroke-linejoin="round" stroke-linecap="round"/><polyline points="870.1,338.8 856.5,337.2" fill="none" stroke="#050605" stroke-width="0.9" stroke-linejoin="round" stroke-linecap="round"/><polyline points="872.5,335.3 860.4,331.7" fill="none" stroke="#050605" stroke-width="0.9" stroke-linejoin="round" stroke-linecap="round"/><polyline points="876.5,332.3 866.6,327.1" fill="none" stroke="#050605" stroke-width="0.9" stroke-linejoin="round" stroke-linecap="round"/><polyline points="881.7,330.0 874.7,323.5" fill="none" stroke="#050605" stroke-width="0.9" stroke-linejoin="round" stroke-linecap="round"/><polyline points="887.7,328.6 884.1,321.2" fill="none" stroke="#050605" stroke-width="0.9" stroke-linejoin="round" stroke-linecap="round"/><polyline points="894.2,328.1 894.2,320.5" fill="none" stroke="#050605" stroke-width="0.9" stroke-linejoin="round" stroke-linecap="round"/><polyline points="900.7,328.6 904.3,321.2" fill="none" stroke="#050605" stroke-width="0.9" stroke-linejoin="round" stroke-linecap="round"/><polyline points="906.7,330.0 913.7,323.5" fill="none" stroke="#050605" stroke-width="0.9" stroke-linejoin="round" stroke-linecap="round"/><polyline points="911.9,332.3 921.8,327.1" fill="none" stroke="#050605" stroke-width="0.9" stroke-linejoin="round" stroke-linecap="round"/><polyline points="915.9,335.3 928.0,331.7" fill="none" stroke="#050605" stroke-width="0.9" stroke-linejoin="round" stroke-linecap="round"/><polyline points="918.3,338.8 931.9,337.2" fill="none" stroke="#050605" stroke-width="0.9" stroke-linejoin="round" stroke-linecap="round"/><ellipse cx="894.2" cy="342.5" rx="23.5" ry="13.4" fill="#8f9890" stroke="#050605" stroke-width="1.1"/><ellipse cx="894.2" cy="342.5" rx="8.3" ry="5.0" fill="url(#hg)" stroke="#050605" stroke-width="0.9"/><ellipse cx="894.2" cy="343.3" rx="5.5" ry="3.2" fill="#7d857e" stroke="#050605" stroke-width="0.6"/><polygon points="1083.4,199.5 986.8,257.9 983.5,261.0 996.9,270.0 996.9,288.0 1008.6,293.8 1083.4,265.4" fill="#383d39" stroke="#050605" stroke-width="1.0" stroke-linejoin="round"/><polygon points="980.0,277.0 996.9,270.0 996.9,288.0" fill="#383d39" stroke="#050605" stroke-width="1.0" stroke-linejoin="round"/><polygon points="705.7,199.5 803.0,256.2 805.6,260.4 791.9,269.8 791.9,287.2 785.0,293.5 705.7,264.7" fill="#757d76" stroke="#050605" stroke-width="1.0" stroke-linejoin="round"/><polygon points="705.7,264.7 785.0,293.5 780.0,296.5 705.7,268.5" fill="url(#flv)" stroke="none" stroke-width="1.0" stroke-linejoin="round"/><polygon points="1008.6,293.8 1083.4,265.4 1085.4,269.6 1014.0,296.5" fill="url(#flv)" stroke="none" stroke-width="1.0" stroke-linejoin="round"/><polyline points="705.7,264.7 785.0,293.5" fill="none" stroke="#050605" stroke-width="1.0" stroke-linejoin="round" stroke-linecap="round"/><polyline points="697.0,273.8 762.0,292.5" fill="none" stroke="#050605" stroke-width="0.7" stroke-linejoin="round" stroke-linecap="round"/><polyline points="696.0,274.5 735.0,298.0 743.0,299.0 755.0,292.0" fill="none" stroke="#050605" stroke-width="0.7" stroke-linejoin="round" stroke-linecap="round"/><polyline points="1008.6,293.8 1083.4,265.4" fill="none" stroke="#050605" stroke-width="1.0" stroke-linejoin="round" stroke-linecap="round"/><polyline points="1001.0,291.5 1085.4,269.6" fill="none" stroke="#050605" stroke-width="0.7" stroke-linejoin="round" stroke-linecap="round"/><polyline points="1092.0,274.4 1052.5,297.8 1044.0,298.5 1033.6,291.3" fill="none" stroke="#050605" stroke-width="0.7" stroke-linejoin="round" stroke-linecap="round"/><polyline points="609.6,310.5 683.4,267.4" fill="none" stroke="#050605" stroke-width="1.0" stroke-linejoin="round" stroke-linecap="round"/><polyline points="636.2,294.8 738.8,317.2" fill="none" stroke="#050605" stroke-width="0.8" stroke-linejoin="round" stroke-linecap="round"/><polygon points="609.6,312.0 625.6,321.6 625.6,377.2 609.6,367.2" fill="#757d76" stroke="#050605" stroke-width="1.0" stroke-linejoin="round"/><polygon points="625.6,322.2 722.5,322.2 722.5,377.2 625.6,377.2" fill="#5f6660" stroke="#050605" stroke-width="1.0" stroke-linejoin="round"/><polygon points="640.0,377.2 722.5,367.0 722.5,377.2" fill="url(#flh)" stroke="none" stroke-width="1.0" stroke-linejoin="round"/><polygon points="717.8,322.2 722.5,322.2 722.5,377.2 717.8,377.2" fill="#7f8780" stroke="#050605" stroke-width="0.6" stroke-linejoin="round"/><polyline points="609.6,310.5 625.6,321.6 722.5,322.2" fill="none" stroke="#050605" stroke-width="1.0" stroke-linejoin="round" stroke-linecap="round"/><ellipse cx="680.6" cy="297.0" rx="8.1" ry="4.6" fill="url(#hg)" stroke="#050605" stroke-width="1.0"/><polygon points="595.2,360.7 607.7,367.2 600.9,371.4 595.2,365.3" fill="#757d76" stroke="#050605" stroke-width="0.7" stroke-linejoin="round"/><polyline points="594.4,358.8 609.3,367.6 589.4,378.0" fill="none" stroke="#050605" stroke-width="0.8" stroke-linejoin="round" stroke-linecap="round"/><polyline points="589.4,370.0 594.4,366.8 602.0,371.5" fill="none" stroke="#050605" stroke-width="0.8" stroke-linejoin="round" stroke-linecap="round"/><polygon points="588.7,379.0 618.4,379.0 618.4,381.3 604.7,381.3 604.7,388.2 588.7,388.2" fill="url(#flh)" stroke="#050605" stroke-width="0.8" stroke-linejoin="round"/><polygon points="604.7,381.3 618.0,381.3 604.7,388.2" fill="url(#fl)" stroke="#050605" stroke-width="0.6" stroke-linejoin="round"/><polyline points="590.0,378.3 625.6,377.6" fill="none" stroke="#050605" stroke-width="0.9" stroke-linejoin="round" stroke-linecap="round"/><polyline points="609.3,367.6 625.6,377.2" fill="none" stroke="#050605" stroke-width="0.8" stroke-linejoin="round" stroke-linecap="round"/><polyline points="586.0,400.0 625.6,377.6" fill="none" stroke="#050605" stroke-width="0.9" stroke-linejoin="round" stroke-linecap="round"/><polygon points="576.0,392.5 580.6,392.5 580.6,403.0 576.0,405.5" fill="url(#fl)" stroke="#050605" stroke-width="0.6" stroke-linejoin="round"/><polyline points="1092.0,274.2 1153.7,240.8 1227.1,282.8 1162.8,321.7 1066.0,322.4" fill="none" stroke="#050605" stroke-width="1.0" stroke-linejoin="round" stroke-linecap="round"/><polygon points="1066.0,322.4 1162.8,321.7 1162.8,377.2 1066.5,376.8" fill="#5f6660" stroke="#050605" stroke-width="1.0" stroke-linejoin="round"/><polygon points="1067.0,369.0 1162.8,377.2 1067.0,376.8" fill="url(#flh)" stroke="none" stroke-width="1.0" stroke-linejoin="round"/><polygon points="1066.0,322.4 1070.3,322.4 1070.3,376.8 1066.5,376.8" fill="#4f5650" stroke="#050605" stroke-width="0.6" stroke-linejoin="round"/><polygon points="1162.8,321.7 1227.1,284.0 1227.1,321.0 1213.7,328.5 1213.7,349.0 1162.8,377.2" fill="#383d39" stroke="#050605" stroke-width="1.0" stroke-linejoin="round"/><polyline points="1162.8,377.2 1183.6,379.4 1206.0,380.0 1212.9,386.0" fill="none" stroke="#050605" stroke-width="0.8" stroke-linejoin="round" stroke-linecap="round"/><polyline points="1172.0,383.0 1202.0,384.5 1208.0,390.0 1208.0,431.0" fill="none" stroke="#050605" stroke-width="0.7" stroke-linejoin="round" stroke-linecap="round"/><polyline points="1186.0,381.0 1186.0,434.0" fill="none" stroke="#050605" stroke-width="0.7" stroke-linejoin="round" stroke-linecap="round"/><polyline points="1183.0,383.0 1183.0,437.0" fill="none" stroke="#050605" stroke-width="0.7" stroke-linejoin="round" stroke-linecap="round"/><polyline points="1165.0,378.5 1178.8,389.8" fill="none" stroke="#050605" stroke-width="1.0" stroke-linejoin="round" stroke-linecap="round"/><polyline points="1052.5,401.0 1035.0,407.2 1015.0,394.0" fill="none" stroke="#050605" stroke-width="1.0" stroke-linejoin="round" stroke-linecap="round"/><polyline points="1026.7,385.2 1130.0,417.2" fill="none" stroke="#050605" stroke-width="0.8" stroke-linejoin="round" stroke-linecap="round"/><polygon points="985.7,412.5 1009.9,398.8 1005.7,431.4 997.8,427.2" fill="#3e443f" stroke="#050605" stroke-width="0.7" stroke-linejoin="round"/><polygon points="983.6,438.7 997.8,430.3 997.8,449.2" fill="#383d39" stroke="#050605" stroke-width="1.0" stroke-linejoin="round"/><polygon points="997.8,430.3 1005.7,431.4 1012.5,439.8 1005.7,445.0 997.8,449.2" fill="url(#fl)" stroke="#050605" stroke-width="0.6" stroke-linejoin="round"/><polygon points="1012.5,394.6 1033.0,408.3 1033.0,461.8 1012.5,439.8" fill="#757d76" stroke="#050605" stroke-width="1.0" stroke-linejoin="round"/><polygon points="1033.0,408.3 1045.6,402.0 1045.6,448.2 1033.0,454.5" fill="#383d39" stroke="#050605" stroke-width="1.0" stroke-linejoin="round"/><polygon points="1045.6,402.0 1053.5,402.5 1053.5,449.2 1045.6,448.2" fill="url(#fl)" stroke="#050605" stroke-width="0.6" stroke-linejoin="round"/><polygon points="1053.5,402.5 1105.4,431.9 1105.4,492.9 1053.5,449.2" fill="#757d76" stroke="#050605" stroke-width="1.0" stroke-linejoin="round"/><polyline points="1014.0,442.5 1033.0,462.5 1046.0,450.5 1053.0,451.5" fill="none" stroke="#c3cbc4" stroke-width="1.6" stroke-linejoin="round" stroke-linecap="round"/><polyline points="1012.5,439.8 1033.0,461.8 1045.6,448.2 1053.5,449.2" fill="none" stroke="#050605" stroke-width="0.8" stroke-linejoin="round" stroke-linecap="round"/><polygon points="1106.8,431.1 1179.5,389.4 1179.5,446.2 1197.8,435.3 1200.3,438.7 1207.0,437.8 1212.9,432.8 1212.9,466.2 1132.7,512.1 1106.8,494.6" fill="#383d39" stroke="#050605" stroke-width="1.0" stroke-linejoin="round"/><polyline points="1105.0,431.4 1105.0,493.0" fill="none" stroke="#a8b0a9" stroke-width="0.6" stroke-linejoin="round" stroke-linecap="round"/><ellipse cx="1108.0" cy="402.8" rx="8.0" ry="4.7" fill="url(#hg)" stroke="#050605" stroke-width="1.0"/><polygon points="1213.7,368.6 1263.8,395.2 1263.8,491.4 1214.5,466.2" fill="#757d76" stroke="#050605" stroke-width="1.0" stroke-linejoin="round"/><polygon points="1213.7,368.6 1219.0,371.4 1219.0,468.5 1213.7,466.2" fill="url(#fl)" stroke="#050605" stroke-width="0.5" stroke-linejoin="round"/><polygon points="1259.6,302.5 1344.4,350.0 1263.8,395.2 1213.7,368.6 1213.7,327.9" fill="#889189" stroke="#050605" stroke-width="1.0" stroke-linejoin="round"/><ellipse cx="1268.8" cy="352.4" rx="23.8" ry="13.4" fill="url(#hg)" stroke="#050605" stroke-width="1.0"/><ellipse cx="1209.5" cy="479.9" rx="6.0" ry="3.7" fill="url(#hg)" stroke="#050605" stroke-width="1.0"/><ellipse cx="1235.4" cy="494.6" rx="6.0" ry="3.7" fill="url(#hg)" stroke="#050605" stroke-width="1.0"/><polyline points="1052.5,449.5 1105.1,492.9" fill="none" stroke="#050605" stroke-width="0.9" stroke-linejoin="round" stroke-linecap="round"/><polyline points="1055.0,448.0 1107.0,491.0 1133.7,512.0 1150.4,529.5" fill="none" stroke="#c6cdc7" stroke-width="0.7" stroke-linejoin="round" stroke-linecap="round"/><ellipse cx="1060.0" cy="464.9" rx="3.0" ry="1.9" fill="url(#hg)" stroke="#050605" stroke-width="1.0"/><ellipse cx="1068.7" cy="471.2" rx="3.0" ry="1.9" fill="url(#hg)" stroke="#050605" stroke-width="1.0"/><ellipse cx="1078.7" cy="478.7" rx="3.0" ry="1.9" fill="url(#hg)" stroke="#050605" stroke-width="1.0"/><ellipse cx="1087.6" cy="485.4" rx="3.0" ry="1.9" fill="url(#hg)" stroke="#050605" stroke-width="1.0"/><polyline points="1087.0,567.1 1150.4,529.5" fill="none" stroke="#6d756e" stroke-width="2.2" stroke-linejoin="round" stroke-linecap="round"/><polyline points="983.6,438.7 1082.8,498.6" fill="none" stroke="#050605" stroke-width="1.0" stroke-linejoin="round" stroke-linecap="round"/><polygon points="942.3,506.2 1008.0,542.6 1008.0,599.2 976.3,582.1 942.3,562.0" fill="#757d76" stroke="#050605" stroke-width="1.0" stroke-linejoin="round"/><ellipse cx="985.9" cy="473.3" rx="8.0" ry="4.6" fill="url(#hg)" stroke="#050605" stroke-width="1.0"/><polygon points="894.5,608.8 976.3,561.2 976.3,619.7 1007.2,598.8 1008.0,542.6 1011.8,542.6 1082.8,499.8 1082.8,564.6 1087.0,568.0 1150.4,531.2 1151.5,529.2 1151.5,557.1 1193.5,533.4 1193.5,540.8 1199.3,538.2 1199.3,551.3 894.5,726.0" fill="#383d39" stroke="#050605" stroke-width="1.0" stroke-linejoin="round"/><polygon points="976.3,582.1 1007.2,598.8 976.3,619.7" fill="#889189" stroke="#050605" stroke-width="1.0" stroke-linejoin="round"/><polyline points="978.0,617.5 1006.0,598.8" fill="none" stroke="#bcc4bd" stroke-width="1.2" stroke-linejoin="round" stroke-linecap="round"/><polygon points="1008.0,542.6 1011.8,542.6 1011.8,597.0 1008.0,599.2" fill="#757d76" stroke="#050605" stroke-width="0.5" stroke-linejoin="round"/><polygon points="1215.5,540.3 1344.8,466.2 1344.4,350.0 1265.5,395.2 1265.4,491.4 1220.8,516.6 1220.8,522.9 1215.5,527.1" fill="#383d39" stroke="#050605" stroke-width="1.0" stroke-linejoin="round"/><polygon points="1262.8,395.2 1265.5,395.2 1265.4,491.4 1262.8,491.4" fill="#757d76" stroke="#050605" stroke-width="0.4" stroke-linejoin="round"/><ellipse cx="1045.0" cy="542.5" rx="1.6" ry="2.6" fill="#c9d0ca" stroke="#050605" stroke-width="0.5" transform="rotate(25 1045.0 542.5)"/><polygon points="1164.1,512.4 1183.5,500.4 1183.5,507.2 1178.8,510.3 1178.8,522.9 1164.1,514.5" fill="#383d39" stroke="#050605" stroke-width="1.0" stroke-linejoin="round"/><polygon points="1183.5,499.0 1190.5,499.5 1190.5,506.5 1183.5,507.2" fill="url(#fl)" stroke="#050605" stroke-width="0.5" stroke-linejoin="round"/><polygon points="1178.8,510.3 1185.6,509.5 1185.6,522.9 1178.8,522.9" fill="url(#fl)" stroke="#050605" stroke-width="0.5" stroke-linejoin="round"/><polygon points="1192.4,501.4 1220.8,518.2 1220.8,522.9 1218.0,524.5 1191.4,507.2" fill="#757d76" stroke="#050605" stroke-width="1.0" stroke-linejoin="round"/><polygon points="1185.6,510.3 1215.5,527.1 1215.5,540.3 1185.6,522.9" fill="#757d76" stroke="#050605" stroke-width="1.0" stroke-linejoin="round"/><polygon points="1178.8,522.9 1185.6,522.9 1215.5,540.3 1199.3,551.3 1199.3,538.2 1193.5,533.4" fill="#2b3c5f" stroke="none" stroke-width="1.0" stroke-linejoin="round"/><polyline points="1178.8,522.9 1193.5,533.4" fill="none" stroke="#050605" stroke-width="1.0" stroke-linejoin="round" stroke-linecap="round"/><polyline points="1185.6,522.9 1215.5,540.3" fill="none" stroke="#050605" stroke-width="1.0" stroke-linejoin="round" stroke-linecap="round"/><polygon points="1193.5,533.4 1193.5,540.8 1199.3,538.2 1199.3,551.3 1196.0,553.2 1190.0,544.0" fill="#383d39" stroke="none" stroke-width="1.0" stroke-linejoin="round"/><polyline points="1193.5,533.4 1193.5,540.8 1199.3,538.2 1199.3,551.3" fill="none" stroke="#050605" stroke-width="1.0" stroke-linejoin="round" stroke-linecap="round"/><polygon points="1151.5,529.2 1159.0,529.2 1161.0,532.0 1159.0,535.5 1151.5,535.5" fill="url(#fl)" stroke="#050605" stroke-width="0.6" stroke-linejoin="round"/><polygon points="705.2,498.8 792.1,447.8 792.1,432.0 798.0,432.0 805.4,439.5 820.0,436.0 846.0,439.0 846.1,506.1 779.6,542.0" fill="#889189" stroke="none" stroke-width="1.0" stroke-linejoin="round"/><polyline points="705.2,498.8 792.1,447.8 792.1,432.0 798.0,432.0 805.4,439.5" fill="none" stroke="#050605" stroke-width="1.0" stroke-linejoin="round" stroke-linecap="round"/><polygon points="782.1,541.9 845.6,505.2 845.6,539.4 811.3,559.5 811.3,582.0 782.1,597.9" fill="#383d39" stroke="#050605" stroke-width="1.0" stroke-linejoin="round"/><polygon points="846.0,436.0 942.3,436.0 942.3,541.0 846.0,541.0" fill="#889189" stroke="none" stroke-width="1.0" stroke-linejoin="round"/><polygon points="846.0,439.0 851.3,439.0 851.3,536.0 846.0,539.0" fill="#666d67" stroke="#050605" stroke-width="0.6" stroke-linejoin="round"/><polygon points="938.0,439.0 942.3,439.0 942.3,539.0 938.0,536.0" fill="#666d67" stroke="#050605" stroke-width="0.6" stroke-linejoin="round"/><polygon points="851.3,444.0 869.0,444.0 869.0,492.0 873.6,500.0 851.3,500.0" fill="#5f6660" stroke="#050605" stroke-width="1.0" stroke-linejoin="round"/><polygon points="869.0,444.0 873.6,447.0 873.6,500.0 869.0,492.0" fill="#757d76" stroke="#050605" stroke-width="0.6" stroke-linejoin="round"/><polygon points="919.5,444.0 938.0,444.0 938.0,500.0 914.5,500.0 919.5,492.0" fill="#5f6660" stroke="#050605" stroke-width="1.0" stroke-linejoin="round"/><polygon points="919.5,444.0 914.5,447.0 914.5,500.0 919.5,492.0" fill="#757d76" stroke="#050605" stroke-width="0.6" stroke-linejoin="round"/><polyline points="846.0,493.6 869.0,493.6" fill="none" stroke="#050605" stroke-width="0.7" stroke-linejoin="round" stroke-linecap="round"/><polyline points="919.5,493.6 942.3,493.6" fill="none" stroke="#050605" stroke-width="0.7" stroke-linejoin="round" stroke-linecap="round"/><polygon points="870.6,432.0 917.3,432.0 912.3,462.0 875.6,462.0" fill="#474d48" stroke="#050605" stroke-width="1.0" stroke-linejoin="round"/><polygon points="875.6,462.0 912.3,462.0 914.5,472.0 873.6,472.0" fill="#69706a" stroke="#050605" stroke-width="1.0" stroke-linejoin="round"/><polygon points="873.6,472.0 914.5,472.0 914.5,477.0 873.6,477.0" fill="#8f9890" stroke="#050605" stroke-width="0.6" stroke-linejoin="round"/><polygon points="888.0,448.0 901.0,448.0 901.0,457.0 888.0,457.0" fill="#c8cfc9" stroke="#050605" stroke-width="0.7" stroke-linejoin="round"/><polygon points="888.0,448.0 901.0,448.0 901.0,450.5 888.0,450.5" fill="#111" stroke="none" stroke-width="1.0" stroke-linejoin="round"/><polyline points="888.0,453.0 901.0,453.0" fill="none" stroke="#050605" stroke-width="0.6" stroke-linejoin="round" stroke-linecap="round"/><ellipse cx="854.9" cy="514.5" rx="2.6" ry="1.8" fill="url(#hg)" stroke="#050605" stroke-width="1.0"/><ellipse cx="933.7" cy="514.5" rx="2.6" ry="1.8" fill="url(#hg)" stroke="#050605" stroke-width="1.0"/><ellipse cx="854.9" cy="522.8" rx="2.6" ry="1.8" fill="url(#hg)" stroke="#050605" stroke-width="1.0"/><ellipse cx="933.7" cy="522.8" rx="2.6" ry="1.8" fill="url(#hg)" stroke="#050605" stroke-width="1.0"/><ellipse cx="854.9" cy="532.8" rx="2.6" ry="1.8" fill="url(#hg)" stroke="#050605" stroke-width="1.0"/><ellipse cx="933.7" cy="532.8" rx="2.6" ry="1.8" fill="url(#hg)" stroke="#050605" stroke-width="1.0"/><rect x="883.6" y="486.9" width="21" height="42" rx="10.5" fill="#889189" stroke="#050605" stroke-width="0.9"/><ellipse cx="894.0" cy="499.0" rx="10.5" ry="6.5" fill="none" stroke="#050605" stroke-width="1.0"/><ellipse cx="894.0" cy="507.0" rx="11.5" ry="6.5" fill="#7b837c" stroke="#050605" stroke-width="1.0"/><ellipse cx="893.8" cy="510.3" rx="8.0" ry="4.8" fill="#565d57" stroke="#050605" stroke-width="1.0"/><ellipse cx="893.8" cy="497.5" rx="1.5" ry="1.2" fill="#333" stroke="#050605" stroke-width="0.5"/><polygon points="851.9,535.3 934.6,535.3 976.3,559.6 894.5,608.8 811.8,560.4" fill="#889189" stroke="#050605" stroke-width="1.0" stroke-linejoin="round"/><ellipse cx="898.3" cy="566.2" rx="23.5" ry="13.9" fill="url(#hg)" stroke="#050605" stroke-width="1.0"/><polygon points="561.6,415.3 625.0,378.5 722.5,377.2 722.5,364.8 732.5,364.8 737.5,378.5 747.5,389.8 760.0,403.5 755.0,409.0 742.0,402.0 736.0,402.0 634.2,458.7" fill="#889189" stroke="none" stroke-width="1.0" stroke-linejoin="round"/><polyline points="561.6,415.3 625.0,378.5" fill="none" stroke="#050605" stroke-width="1.0" stroke-linejoin="round" stroke-linecap="round"/><polyline points="722.5,364.8 732.5,364.8" fill="none" stroke="#050605" stroke-width="0.7" stroke-linejoin="round" stroke-linecap="round"/><polygon points="732.5,364.8 747.0,361.5 751.5,372.0 737.5,377.5" fill="#889189" stroke="#050605" stroke-width="0.8" stroke-linejoin="round"/><polygon points="637.1,459.5 735.3,402.7 735.3,447.0 637.1,521.3" fill="#383d39" stroke="#050605" stroke-width="1.0" stroke-linejoin="round"/><polygon points="735.3,402.5 742.0,402.0 742.0,447.0 735.3,447.5" fill="url(#fl)" stroke="#050605" stroke-width="0.5" stroke-linejoin="round"/><polygon points="742.0,402.0 755.3,409.4 755.3,454.5 742.0,447.0" fill="#757d76" stroke="#050605" stroke-width="1.0" stroke-linejoin="round"/><polygon points="755.3,409.4 775.4,396.9 775.4,437.8 755.3,454.5" fill="#383d39" stroke="#050605" stroke-width="1.0" stroke-linejoin="round"/><polygon points="775.4,396.9 783.5,401.0 783.5,443.0 775.4,437.8" fill="url(#fl)" stroke="#050605" stroke-width="0.5" stroke-linejoin="round"/><polygon points="783.5,401.0 792.1,406.0 792.1,432.0 792.1,447.8 783.5,443.0" fill="#757d76" stroke="#050605" stroke-width="0.6" stroke-linejoin="round"/><polygon points="637.1,521.3 735.3,447.0 742.0,447.0 755.3,454.5 775.4,437.8 783.5,443.0 792.1,447.8 705.2,498.8 705.3,564.5 701.9,567.8 640.1,531.9 635.4,524.4" fill="#939c94" stroke="#050605" stroke-width="1.0" stroke-linejoin="round"/><polyline points="640.5,527.0 739.0,452.0 755.3,461.2 778.0,444.0" fill="none" stroke="#050605" stroke-width="0.7" stroke-linejoin="round" stroke-linecap="round"/><polyline points="643.0,529.5 703.0,564.5" fill="none" stroke="#c6cdc7" stroke-width="1.3" stroke-linejoin="round" stroke-linecap="round"/><ellipse cx="728.1" cy="464.9" rx="3.0" ry="1.9" fill="url(#hg)" stroke="#050605" stroke-width="1.0"/><ellipse cx="719.8" cy="471.2" rx="3.0" ry="1.9" fill="url(#hg)" stroke="#050605" stroke-width="1.0"/><ellipse cx="709.8" cy="478.7" rx="3.0" ry="1.9" fill="url(#hg)" stroke="#050605" stroke-width="1.0"/><ellipse cx="701.4" cy="485.4" rx="3.0" ry="1.9" fill="url(#hg)" stroke="#050605" stroke-width="1.0"/><polygon points="530.6,396.9 575.3,371.9 575.3,406.1 561.6,414.4 561.6,437.0 530.2,454.5" fill="#383d39" stroke="#050605" stroke-width="1.0" stroke-linejoin="round"/><polygon points="528.6,455.4 561.6,437.0 561.6,475.4" fill="#889189" stroke="#050605" stroke-width="1.0" stroke-linejoin="round"/><polyline points="530.5,456.8 561.0,474.0" fill="none" stroke="#c6cdc7" stroke-width="1.3" stroke-linejoin="round" stroke-linecap="round"/><polygon points="444.7,349.5 524.4,304.0 575.3,333.5 575.3,371.5 527.5,397.2" fill="#889189" stroke="#050605" stroke-width="1.0" stroke-linejoin="round"/><ellipse cx="519.7" cy="347.5" rx="23.5" ry="13.4" fill="url(#hg)" stroke="#050605" stroke-width="1.0"/><polygon points="444.7,349.5 526.9,396.9 530.6,396.9 530.2,454.5 528.6,455.4 561.6,475.4 561.6,415.3 634.6,458.7 637.1,459.5 637.1,521.3 635.4,524.4 640.1,531.9 701.9,567.8 705.3,564.5 705.2,498.8 779.6,541.9 782.1,541.9 782.1,597.9 779.6,599.6 811.3,619.6 811.3,560.4 894.5,608.8 894.5,726.0 444.7,467.0" fill="#757d76" stroke="#050605" stroke-width="1.0" stroke-linejoin="round"/><polyline points="526.9,396.9 526.9,454.0" fill="none" stroke="#050605" stroke-width="0.6" stroke-linejoin="round" stroke-linecap="round"/><polyline points="634.6,458.7 634.6,523.0" fill="none" stroke="#050605" stroke-width="0.6" stroke-linejoin="round" stroke-linecap="round"/><polyline points="779.6,541.9 779.6,599.6" fill="none" stroke="#050605" stroke-width="0.6" stroke-linejoin="round" stroke-linecap="round"/><polygon points="779.6,599.6 811.3,582.0 811.3,619.6" fill="#889189" stroke="#050605" stroke-width="1.0" stroke-linejoin="round"/><polyline points="781.5,601.0 810.5,618.5" fill="none" stroke="#c6cdc7" stroke-width="1.3" stroke-linejoin="round" stroke-linecap="round"/><ellipse cx="516.4" cy="448.2" rx="8.0" ry="5.2" fill="url(#hg2)" stroke="#050605" stroke-width="1.0" transform="rotate(60 516.4 448.2)"/><ellipse cx="560.6" cy="488.8" rx="8.0" ry="5.2" fill="url(#hg2)" stroke="#050605" stroke-width="1.0" transform="rotate(60 560.6 488.8)"/><ellipse cx="598.4" cy="526.3" rx="8.0" ry="5.2" fill="url(#hg2)" stroke="#050605" stroke-width="1.0" transform="rotate(60 598.4 526.3)"/><ellipse cx="632.6" cy="561.6" rx="8.0" ry="5.2" fill="url(#hg2)" stroke="#050605" stroke-width="1.0" transform="rotate(60 632.6 561.6)"/><ellipse cx="706.1" cy="604.2" rx="8.0" ry="5.2" fill="url(#hg2)" stroke="#050605" stroke-width="1.0" transform="rotate(60 706.1 604.2)"/><ellipse cx="740.0" cy="608.4" rx="8.0" ry="5.2" fill="url(#hg2)" stroke="#050605" stroke-width="1.0" transform="rotate(60 740.0 608.4)"/><ellipse cx="777.9" cy="614.9" rx="8.0" ry="5.2" fill="url(#hg2)" stroke="#050605" stroke-width="1.0" transform="rotate(60 777.9 614.9)"/><ellipse cx="822.2" cy="624.6" rx="8.0" ry="5.2" fill="url(#hg2)" stroke="#050605" stroke-width="1.0" transform="rotate(60 822.2 624.6)"/><linearGradient id="og" x1="0" x2="1" y1="0" y2="1"><stop offset="0" stop-color="#f9a825"/><stop offset="1" stop-color="#ea5f14"/></linearGradient><radialGradient id="wg" cx="0.5" cy="0.5" r="0.5"><stop offset="0" stop-color="#fff" stop-opacity="0.85"/><stop offset="0.7" stop-color="#fff" stop-opacity="0.35"/><stop offset="1" stop-color="#fff" stop-opacity="0"/></radialGradient><g transform="translate(830.8 399.0)" opacity="0.9"><path d="M0 9.5 L3.6 6 V5 L7.6 1.8 V0.8 L11.6 3.2 V27.5 H0z" fill="url(#og)"/><path d="M45 9.5 L41.4 6 V5 L37.4 1.8 V0.8 L33.4 3.2 V27.5 H45z" fill="url(#og)"/><path d="M3.8 7 V27 M7.8 3 V27 M41.2 7 V27 M37.2 3 V27" stroke="#f6c58c" stroke-width="0.7" fill="none"/><path d="M0 27 H45 V32 H27 Q22.5 29.5 18 32 H0z" fill="url(#og)"/><circle cx="22.5" cy="18" r="11" fill="url(#wg)"/><path d="M21.5 5 C13 9 11.5 19 17 25.5 C15.5 18 18 12.5 23.5 11.5 C26 14 25 18.5 21.5 22 C25.5 23 31 20.5 31.5 14 C30 17 27.5 18 26.5 17.5 C28 12 26 7 21.5 5z" fill="url(#og)"/><ellipse cx="22.5" cy="30.2" rx="5" ry="1.3" fill="#e8501a"/></g><text x="887.0" y="420.3" font-family="'Liberation Sans','Noto Sans CJK SC',sans-serif" font-size="16.4" font-weight="bold" fill="#f28a22" fill-opacity="0.92" textLength="82" lengthAdjust="spacingAndGlyphs">智造资料网</text><text x="887.5" y="428.4" font-family="'Liberation Sans',sans-serif" font-size="4.6" font-weight="bold" fill="#f28a22" fill-opacity="0.85" textLength="81" lengthAdjust="spacingAndGlyphs">INTELLIGENT MANUFACTURING DATA</text><g transform="translate(59.5 832.8)"><polygon points="1.5,-20.4 18.9,-31 18.9,7.5 1.5,-2.5" fill="#ffffff" fill-opacity="0.22" stroke="#d9dde6" stroke-width="0.6"/><polyline points="1.5,-20.4 18.9,-10.5" fill="none" stroke="#e6e6e0" stroke-width="0.6"/><polygon points="0,0 18.3,-10.5 36.3,0 18.3,11.2" fill="#a8b04a" fill-opacity="0.55"/><polyline points="18.3,-10.5 36.3,0 18.3,11.2" fill="none" stroke="#f2e81a" stroke-width="0.8"/><polyline points="18.9,-10.5 18.9,7.5" fill="none" stroke="#e6e6e0" stroke-width="0.6"/><line x1="0" y1="0" x2="0" y2="-52" stroke="#0aa7ba" stroke-width="1.6"/><polygon points="0,-61 -4.2,-51.5 4.2,-51.5" fill="#19d4e6"/><line x1="0" y1="0" x2="30" y2="-17.6" stroke="#14c414" stroke-width="1.8"/><polygon points="36.5,-21.2 26.5,-20 30.5,-12.8" fill="#14c414"/><line x1="0" y1="0" x2="19" y2="11" stroke="#e41212" stroke-width="2"/><polygon points="25,14.6 14.8,13.8 19.4,6.4" fill="#e41212"/><circle cx="0" cy="0" r="3.8" fill="#777"/><circle cx="-1" cy="-1" r="1.6" fill="#9a9a9a"/><text x="0" y="-62.5" font-family="'Liberation Sans',sans-serif" font-size="10.5" fill="#dcdcd4" text-anchor="middle">Z</text><text x="40" y="-19.5" font-family="'Liberation Sans',sans-serif" font-size="10" fill="#f01414" text-anchor="middle">Y</text><text x="29.5" y="21.5" font-family="'Liberation Sans',sans-serif" font-size="10" fill="#e6e6e0" text-anchor="middle">X</text></g></svg><div class="vb" style="left:4px;top:4px"><svg class="abs" style="left:2px;top:2px" width="20" height="20" viewBox="0 0 20 20"><rect x="1.5" y="2.6" width="17" height="3.2" rx="0.8" fill="#46639a"/><rect x="1.5" y="8.4" width="17" height="3.2" rx="0.8" fill="#46639a"/><rect x="1.5" y="14.2" width="17" height="3.2" rx="0.8" fill="#46639a"/></svg></div><div class="vb" style="left:32px;top:4px"><svg class="abs" style="left:2px;top:2px" width="20" height="20" viewBox="0 0 20 20"><rect x="5" y="5.5" width="10.5" height="9.5" fill="url(#gSq)" stroke="#667" stroke-width="0.6"/><path d="M2 2 l4 1 l-3 3z M18 2 l-1 4 l-3 -3z M2 18 l1 -4 l3 3z M18 18 l-4 -1 l3 -3z" fill="#39c524"/><path d="M2 2 L5 5 M18 2 L15 5 M2 18 L5 15 M18 18 L15 15" stroke="#39c524" stroke-width="1.6"/></svg></div><div class="vb" style="left:60px;top:4px"><svg class="abs" style="left:2px;top:2px" width="20" height="20" viewBox="0 0 20 20"><g transform="translate(1 0) scale(1)"><path d="M2 18 L8 11" stroke="#9aa0a8" stroke-width="3" stroke-linecap="round"/><path d="M2 18 L8 11" stroke="#e8ebf0" stroke-width="1.2" stroke-linecap="round"/><circle cx="11.5" cy="7.5" r="6" fill="url(#gLens)" stroke="#8c96a8" stroke-width="1.6"/></g><path d="M2 5 q3 -4 6 -2 M2 9 q2 -3 4 -2" stroke="#b9c6dd" stroke-width="1" fill="none"/></svg></div><div class="vb" style="left:88px;top:4px"><svg class="abs" style="left:2px;top:2px" width="20" height="20" viewBox="0 0 20 20"><path d="M1 14 L10 10 L19 14 L10 18z" fill="#9a9eae" stroke="#70748a" stroke-width="0.5"/><path d="M9 13 V2" stroke="#2a6de0" stroke-width="1.6"/><path d="M9 0 l-2.4 4 h4.8z" fill="#2a6de0"/><path d="M9 13 L15 9" stroke="#2eb82e" stroke-width="1.6"/><path d="M17.5 7.5 l-4.4 0.4 l2.2 3.2z" fill="#2eb82e"/><path d="M9 13 L15 17" stroke="#d62a2a" stroke-width="1.6"/><path d="M17.5 18.6 l-4.4 -0.7 l2.3 -3.2z" fill="#d62a2a"/><circle cx="9" cy="13" r="1.5" fill="#eee"/></svg></div><div class="vb" style="left:116px;top:4px"><svg class="abs" style="left:2px;top:2px" width="20" height="20" viewBox="0 0 20 20"><polygon points="1.3,5.5 10.5,1.3 19.7,4.7 10.5,8.8" fill="url(#gGreen)"/><path d="M1.3 5.5 L10.5 1.3 L19.7 4.7 L19.7 13.8 L10.5 18.8 L1.3 14.7z M1.3 5.5 L10.5 8.8 L19.7 4.7 M10.5 8.8 V18.8 M1.3 14.7 L10.5 10.5 L19.7 13.8 M10.5 10.5 V1.3" fill="none" stroke="#000" stroke-width="1.2" stroke-linejoin="round"/></svg></div><div class="vb" style="left:144px;top:4px"><svg class="abs" style="left:2px;top:2px" width="20" height="20" viewBox="0 0 20 20"><polygon points="1.3,14.7 10.5,10.5 19.7,13.8 10.5,18.8" fill="url(#gGreen)"/><path d="M1.3 5.5 L10.5 1.3 L19.7 4.7 L19.7 13.8 L10.5 18.8 L1.3 14.7z M1.3 5.5 L10.5 8.8 L19.7 4.7 M10.5 8.8 V18.8 M1.3 14.7 L10.5 10.5 L19.7 13.8 M10.5 10.5 V1.3" fill="none" stroke="#000" stroke-width="1.2" stroke-linejoin="round"/></svg></div><div class="vb" style="left:172px;top:4px"><svg class="abs" style="left:2px;top:2px" width="20" height="20" viewBox="0 0 20 20"><polygon points="1.3,5.5 10.5,1.3 10.5,10.5 1.3,14.7" fill="url(#gGreen)"/><path d="M1.3 5.5 L10.5 1.3 L19.7 4.7 L19.7 13.8 L10.5 18.8 L1.3 14.7z M1.3 5.5 L10.5 8.8 L19.7 4.7 M10.5 8.8 V18.8 M1.3 14.7 L10.5 10.5 L19.7 13.8 M10.5 10.5 V1.3" fill="none" stroke="#000" stroke-width="1.2" stroke-linejoin="round"/></svg></div><div class="vb" style="left:200px;top:4px"><svg class="abs" style="left:2px;top:2px" width="20" height="20" viewBox="0 0 20 20"><polygon points="10.5,8.8 19.7,4.7 19.7,13.8 10.5,18.8" fill="url(#gGreen)"/><path d="M1.3 5.5 L10.5 1.3 L19.7 4.7 L19.7 13.8 L10.5 18.8 L1.3 14.7z M1.3 5.5 L10.5 8.8 L19.7 4.7 M10.5 8.8 V18.8 M1.3 14.7 L10.5 10.5 L19.7 13.8 M10.5 10.5 V1.3" fill="none" stroke="#000" stroke-width="1.2" stroke-linejoin="round"/></svg></div><div class="vb" style="left:228px;top:4px"><svg class="abs" style="left:2px;top:2px" width="20" height="20" viewBox="0 0 20 20"><polygon points="1.3,5.5 10.5,8.8 10.5,18.8 1.3,14.7" fill="url(#gGreen)"/><path d="M1.3 5.5 L10.5 1.3 L19.7 4.7 L19.7 13.8 L10.5 18.8 L1.3 14.7z M1.3 5.5 L10.5 8.8 L19.7 4.7 M10.5 8.8 V18.8 M1.3 14.7 L10.5 10.5 L19.7 13.8 M10.5 10.5 V1.3" fill="none" stroke="#000" stroke-width="1.2" stroke-linejoin="round"/></svg></div><div class="vb" style="left:256px;top:4px"><svg class="abs" style="left:2px;top:2px" width="20" height="20" viewBox="0 0 20 20"><polygon points="10.5,1.3 19.7,4.7 19.7,13.8 10.5,10.5" fill="url(#gGreen)"/><path d="M1.3 5.5 L10.5 1.3 L19.7 4.7 L19.7 13.8 L10.5 18.8 L1.3 14.7z M1.3 5.5 L10.5 8.8 L19.7 4.7 M10.5 8.8 V18.8 M1.3 14.7 L10.5 10.5 L19.7 13.8 M10.5 10.5 V1.3" fill="none" stroke="#000" stroke-width="1.2" stroke-linejoin="round"/></svg></div><div class="vb" style="left:284px;top:4px"><svg class="abs" style="left:2px;top:2px" width="20" height="20" viewBox="0 0 20 20"><polygon points="1.3,5.5 10.5,8.8 10.5,18.8 1.3,14.7" fill="#2fb81f"/><polygon points="10.5,8.8 19.7,4.7 19.7,13.8 10.5,18.8" fill="#4fd63a"/><polygon points="1.3,5.5 10.5,1.3 19.7,4.7 10.5,8.8" fill="#39c524"/><path d="M1.3 5.5 L10.5 8.8 L19.7 4.7 M10.5 8.8 V18.8" stroke="#1f9a1a" stroke-width="0.6" fill="none"/></svg></div><div class="vb" style="left:4px;top:32px"><svg class="abs" style="left:2px;top:2px" width="20" height="20" viewBox="0 0 20 20"><path d="M5 3.8 v12.4 a5 2.3 0 0 0 10 0 v-12.4" fill="none" stroke="#111" stroke-width="1.1"/><ellipse cx="10" cy="3.8" rx="5" ry="2.3" fill="none" stroke="#111" stroke-width="1.1"/><path d="M5 16.2 a5 2.3 0 0 1 10 0" fill="none" stroke="#111" stroke-width="0.88" opacity="0.7"/></svg></div><div class="vb" style="left:4px;top:60px"><svg class="abs" style="left:2px;top:2px" width="20" height="20" viewBox="0 0 20 20"><path d="M5 3.8 v12.4 a5 2.3 0 0 0 10 0 v-12.4" fill="none" stroke="#111" stroke-width="1.1"/><ellipse cx="10" cy="3.8" rx="5" ry="2.3" fill="none" stroke="#111" stroke-width="1.1"/></svg></div><div class="vb act" style="left:4px;top:88px"><svg class="abs" style="left:1px;top:1px" width="20" height="20" viewBox="0 0 20 20"><path d="M5 3.8 v12.4 a5 2.3 0 0 0 10 0 v-12.4" fill="url(#gBlue)" stroke="#111" stroke-width="1.1"/><ellipse cx="10" cy="3.8" rx="5" ry="2.3" fill="#7fa4e6" stroke="#111" stroke-width="1.1"/></svg></div><div class="vb" style="left:4px;top:116px"><svg class="abs" style="left:2px;top:2px" width="20" height="20" viewBox="0 0 20 20"><path d="M5 3.8 v12.4 a5 2.3 0 0 0 10 0 v-12.4" fill="url(#gLBlue)" stroke="#333" stroke-width="1.1"/><ellipse cx="10" cy="3.8" rx="5" ry="2.3" fill="#eef3fc" stroke="#333" stroke-width="1.1"/></svg></div><div class="vb" style="left:4px;top:144px"><svg class="abs" style="left:2px;top:2px" width="20" height="20" viewBox="0 0 20 20"><path d="M5 3.8 v12.4 a5 2.3 0 0 0 10 0 v-12.4" fill="none" stroke="#111" stroke-width="1.1"/><ellipse cx="10" cy="3.8" rx="5" ry="2.3" fill="none" stroke="#111" stroke-width="1.1"/><path d="M5 16.2 a5 2.3 0 0 1 10 0" fill="none" stroke="#111" stroke-width="0.88" opacity="0.7"/><path d="M7 6 L9 17 M9 6 L7 17 M11 6 L13 17 M13 6 L11 17" stroke="#111" stroke-width="0.7" fill="none"/></svg></div></div>
<div id="left"><svg class="abs" style="left:0px;top:3px" width="58" height="3"><rect width="58" height="3" fill="url(#gdot)"/></svg><svg class="abs" style="left:0px;top:256px" width="58" height="3"><rect width="58" height="3" fill="url(#gdot)"/></svg><svg class="abs" style="left:7px;top:15px" width="21" height="21" viewBox="0 0 21 20"><g transform="translate(1 0) scale(1)"><path d="M2 18 L8 11" stroke="#9aa0a8" stroke-width="3" stroke-linecap="round"/><path d="M2 18 L8 11" stroke="#e8ebf0" stroke-width="1.2" stroke-linecap="round"/><circle cx="11.5" cy="7.5" r="6" fill="url(#gLens)" stroke="#8c96a8" stroke-width="1.6"/></g><path d="M2 5 q3 -4 6 -2 M2 9 q2 -3 4 -2" stroke="#aab6cc" stroke-width="1" fill="none"/></svg><svg class="abs" style="left:33px;top:15px" width="21" height="21" viewBox="0 0 21 20"><path d="M2 3 l5 4 M6 1 L16 12 M5 9 L13 18" stroke="#2f7be8" stroke-width="1.6" stroke-dasharray="4 2" fill="none"/><path d="M3 18 L5 13 L15 2 L18 5 L8 16z" fill="#e2a72e" stroke="#7a5512" stroke-width="0.7"/><path d="M15 2 L18 5 L16.5 6.5 L13.5 3.5z" fill="#d12f2f"/><path d="M3 18 L5 13 L8 16z" fill="#f3dcae" stroke="#7a5512" stroke-width="0.5"/><path d="M3 18 l1-2.2 l1.3 1.3z" fill="#222"/><path d="M15 0 h6 l-3 3.2z" fill="#000"/></svg><svg class="abs" style="left:7px;top:41px" width="21" height="21" viewBox="0 0 21 20"><rect x="4" y="5" width="12" height="10" fill="url(#gSq)" stroke="#667" stroke-width="0.6"/><path d="M1 2 h4 v4 h-4z M15 2 h4 v4 h-4z M1 14 h4 v4 h-4z M15 14 h4 v4 h-4z" fill="#39c524"/><path d="M3 5 V15 M17 5 V15 M5 3.5 H15 M5 16.5 H15" stroke="#333" stroke-width="0.7"/></svg><svg class="abs" style="left:33px;top:41px" width="21" height="21" viewBox="0 0 21 20"><path d="M3 6 q0 -4 4 -3 q5 2 3 8 q-1 6 5 6 q4 0 3 -4 q-2 -4 -8 -2 q-6 2 -7 -5z" fill="none" stroke="#2f6bd8" stroke-width="1.5"/><path d="M3 18 L5 13 L15 2 L18 5 L8 16z" fill="#e2a72e" stroke="#7a5512" stroke-width="0.7"/><path d="M15 2 L18 5 L16.5 6.5 L13.5 3.5z" fill="#d12f2f"/><path d="M3 18 L5 13 L8 16z" fill="#f3dcae" stroke="#7a5512" stroke-width="0.5"/><path d="M3 18 l1-2.2 l1.3 1.3z" fill="#222"/><path d="M15 0 h6 l-3 3.2z" fill="#000"/></svg><svg class="abs" style="left:7px;top:67px" width="21" height="21" viewBox="0 0 21 20"><g transform="translate(2 -1) scale(0.95)"><path d="M2 18 L8 11" stroke="#9aa0a8" stroke-width="3" stroke-linecap="round"/><path d="M2 18 L8 11" stroke="#e8ebf0" stroke-width="1.2" stroke-linecap="round"/><circle cx="11.5" cy="7.5" r="6" fill="url(#gLens)" stroke="#8c96a8" stroke-width="1.6"/></g><path d="M1 3 h4 M3 1 v4 M1 7 h4" stroke="#111" stroke-width="0.9"/><g transform="translate(9 8) scale(0.85)"><path d="M1 4 L6 1 L11 4 L11 10 L6 13 L1 10z" fill="#666" stroke="#333" stroke-width="0.9"/><path d="M1 4 L6 7 L11 4 M6 7 V13" fill="none" stroke="#333" stroke-width="0.9"/><path d="M1 4 L6 7 V13 L1 10z" fill="#777"/></g><path d="M15 0 h6 l-3 3.2z" fill="#000"/></svg><svg class="abs" style="left:33px;top:67px" width="21" height="21" viewBox="0 0 21 20"><rect x="2" y="4" width="15" height="14" fill="#fffef0" stroke="#e8e000" stroke-width="1.6"/><path d="M5 10 l4 5 l7 -11" fill="none" stroke="#2eb82e" stroke-width="2.8" stroke-linecap="round" stroke-linejoin="round"/><path d="M15 0 h6 l-3 3.2z" fill="#000"/></svg><svg class="abs" style="left:7px;top:93px" width="21" height="21" viewBox="0 0 21 20"><path d="M1 12 L11 7 L19 11 L9 17z" fill="#eef2fa" stroke="#8a93a8" stroke-width="0.7"/><path d="M7 12 V2" stroke="#2a6de0" stroke-width="1.6"/><path d="M7 0 l-2.4 4 h4.8z" fill="#2a6de0"/><path d="M7 12 L16 6.5" stroke="#2eb82e" stroke-width="1.6"/><path d="M18.5 5 l-4.5 0.3 l2.2 3.4z" fill="#2eb82e"/><path d="M7 12 L15 17" stroke="#d62a2a" stroke-width="1.6"/><path d="M17.5 18.5 l-4.4 -0.6 l2.3 -3.3z" fill="#d62a2a"/><circle cx="7" cy="12" r="1.6" fill="#eee" stroke="#555" stroke-width="0.5"/><path d="M15 0 h6 l-3 3.2z" fill="#000"/></svg><svg class="abs" style="left:33px;top:93px" width="21" height="21" viewBox="0 0 21 20"><path d="M1 6 q4 -6 8 2 q3 8 9 6 M1 14 q5 4 9 -3" fill="none" stroke="#2f6bd8" stroke-width="1.5"/><path d="M3 18 L5 13 L15 2 L18 5 L8 16z" fill="#e2a72e" stroke="#7a5512" stroke-width="0.7"/><path d="M15 2 L18 5 L16.5 6.5 L13.5 3.5z" fill="#d12f2f"/><path d="M3 18 L5 13 L8 16z" fill="#f3dcae" stroke="#7a5512" stroke-width="0.5"/><path d="M3 18 l1-2.2 l1.3 1.3z" fill="#222"/><path d="M15 0 h6 l-3 3.2z" fill="#000"/></svg><svg class="abs" style="left:7px;top:119px" width="21" height="21" viewBox="0 0 21 20"><path d="M1 3 h10 l1 2 h-10z M2 6 h10 l1 2 h-10z M3 9 h9 l1 2 h-10z" fill="#b9c7ee" stroke="#5266a8" stroke-width="0.6"/><ellipse cx="11" cy="15" rx="7.5" ry="4" fill="#d8b48a" stroke="#7a5a33" stroke-width="0.8"/><circle cx="7.5" cy="15" r="1.5" fill="#2b5fd0"/><circle cx="11" cy="16.7" r="1.5" fill="#d12f2f"/><circle cx="14.5" cy="15" r="1.5" fill="#2ea82e"/><path d="M19 1 L10.5 12" stroke="#8a4a1d" stroke-width="1.6"/><path d="M10.5 12 l-1.6 2.6 l2.8 -1.6z" fill="#333"/><path d="M15 0 h6 l-3 3.2z" fill="#000"/></svg><svg class="abs" style="left:33px;top:119px" width="21" height="21" viewBox="0 0 21 20"><path d="M5 3 L19 1.5 L15 17 L1 18.5z" fill="#7fb0f2" stroke="#2b5fd0" stroke-width="1.2"/><path d="M12 2.3 L8 17.7 M3 10.5 L17 9" stroke="#dfeaff" stroke-width="1.2"/><path d="M15 0 h6 l-3 3.2z" fill="#000"/></svg><svg class="abs" style="left:7px;top:145px" width="21" height="21" viewBox="0 0 21 20"><g transform="scale(1)"><path d="M3 9 A7 7 0 0 1 15.5 5 L17.5 3 V9.5 H11 L13.3 7.2 A4.2 4.2 0 0 0 6 9z" fill="#5b8fd9" stroke="#2e63b5" stroke-width="0.6"/><path d="M17 11 A7 7 0 0 1 4.5 15 L2.5 17 V10.5 H9 L6.7 12.8 A4.2 4.2 0 0 0 14 11z" fill="#5b8fd9" stroke="#2e63b5" stroke-width="0.6"/></g><path d="M15 0 h6 l-3 3.2z" fill="#000"/></svg><svg class="abs" style="left:33px;top:145px" width="21" height="21" viewBox="0 0 21 20"><path d="M2 6 L10 3 L18 6 L18 15 L10 19 L2 15z" fill="#a6a6a6" stroke="#555" stroke-width="0.7"/><path d="M2 6 L10 9 L18 6 L10 3z" fill="#dcdcdc"/><path d="M10 9 V19 L18 15 V6z" fill="#777"/><path d="M15 0 h6 l-3 3.2z" fill="#000"/></svg><svg class="abs" style="left:7px;top:171px" width="21" height="21" viewBox="0 0 21 20"><text x="9" y="16" font-size="19" font-weight="bold" text-anchor="middle" font-family="Liberation Sans,sans-serif" fill="#2f5fc0" stroke="#1a3a80" stroke-width="0.5">?</text><ellipse cx="10" cy="18.5" rx="6" ry="1.2" fill="#000" opacity="0.2"/><path d="M15 0 h6 l-3 3.2z" fill="#000"/></svg><svg class="abs" style="left:33px;top:171px" width="21" height="21" viewBox="0 0 21 20"><path d="M3 4 V19 M17 4 V19" stroke="#222" stroke-width="1.1"/><path d="M3 7 H17" stroke="#222" stroke-width="1.1"/><path d="M3 7 l4 -2.4 v4.8z M17 7 l-4 -2.4 v4.8z" fill="#f2e219" stroke="#222" stroke-width="0.6"/><path d="M15 0 h6 l-3 3.2z" fill="#000"/></svg><svg class="abs" style="left:7px;top:197px" width="21" height="21" viewBox="0 0 21 20"><path d="M4 6 h12 l-1.5 13 h-9z" fill="#a9d6ea" stroke="#3a7a9a" stroke-width="0.8"/><ellipse cx="10" cy="6" rx="6.5" ry="2" fill="#d4ecf6" stroke="#3a7a9a" stroke-width="0.8"/><path d="M7 9 l6 7 M13 9 l-6 7 M10 8 v10" stroke="#6aa6c0" stroke-width="0.7"/><path d="M8 1 l4 2 l-3 2z" fill="#e8e000" stroke="#555" stroke-width="0.5"/><path d="M15 0 h6 l-3 3.2z" fill="#000"/></svg><svg class="abs" style="left:33px;top:197px" width="21" height="21" viewBox="0 0 21 20"><g><path d="M2 8 L9 2 V6 C15 6 18 10 16 18 C15 13 13 11 9 11 V14z" fill="#a9adb3" stroke="#80848a" stroke-width="0.7"/></g><path d="M15 0 h6 l-3 3.2z" fill="#000"/></svg><svg class="abs" style="left:7px;top:223px" width="21" height="21" viewBox="0 0 21 20"><path d="M1 2 V16 M4 2 V16" stroke="#444" stroke-width="1.3"/><circle cx="12" cy="10" r="6" fill="none" stroke="#c46a1a" stroke-width="1.6"/><path d="M12 2 V18 M4 10 H20 M6.5 4.5 L17.5 15.5 M17.5 4.5 L6.5 15.5" stroke="#c46a1a" stroke-width="1.2"/><circle cx="12" cy="10" r="2" fill="#e8901a"/><path d="M2 17 h12 l3 2 h-12z" fill="#f27c19"/><path d="M15 0 h6 l-3 3.2z" fill="#000"/></svg><svg class="abs" style="left:33px;top:223px" width="21" height="21" viewBox="0 0 21 20"><path d="M1 5 h6 l2 2 h6 v9 h-14z" fill="#e9c34f" stroke="#9a7a1c" stroke-width="0.7"/><path d="M1 16 L4 8 h14 l-3 8z" fill="url(#gFold)" stroke="#9a7a1c" stroke-width="0.7"/><path d="M9 3 h5 v4 h-5z" fill="#2eb82e"/><path d="M5 13 h14 v6 h-14z" fill="#fff" stroke="#222" stroke-width="0.9"/></svg></div><div id="strip2"></div>
<div id="status"><div class="abs" style="left:2px;top:19px;width:1916px;height:1px;background:#a2a2a2"></div><div class="abs" style="left:1336px;top:4px;width:3px;height:14px;background-image:linear-gradient(#aab 50%,transparent 50%);background-size:3px 2px"></div><div class="abs" style="left:1341px;top:3px;width:131px;height:15px;background:#fff"></div><div class="st" style="left:1486px;top:3px">绝对 XY 上视图</div><div class="sep" style="left:1592px;top:4px;height:13px"></div><div class="st" style="left:1601px;top:3px">绝对视图</div><div class="abs" style="left:1657px;top:4px;width:3px;height:14px;background-image:linear-gradient(#aab 50%,transparent 50%);background-size:3px 2px"></div><div class="st" style="left:1668px;top:3px;font-weight:bold">LAYER0</div><div class="sep" style="left:1726px;top:3px;height:14px"></div><div class="sep" style="left:1757px;top:3px;height:14px"></div><div class="sep" style="left:1800px;top:3px;height:14px"></div><div class="sep" style="left:1843px;top:3px;height:14px"></div><div class="sep" style="left:1886px;top:3px;height:14px"></div><div class="abs" style="left:1762px;top:4px;width:32px;height:12px;background:#45618a"></div><div class="abs" style="left:1805px;top:4px;width:32px;height:12px;background:#45618a"></div><div class="abs" style="left:1848px;top:4px;width:32px;height:12px;background:#45618a"></div><svg class="abs" style="left:1894px;top:2px" width="14" height="14" viewBox="0 0 14 14"><circle cx="7" cy="7" r="6.5" fill="#1a2fc0"/><path d="M3 3 q3 -2 5 0 q1 3 -2 4 q-3 0 -3 -4z M8 8 q3 -1 4 1 q-1 3 -3 3z" fill="#2ec52e"/><circle cx="5" cy="4" r="1.2" fill="#bfe0ff" opacity="0.7"/></svg><div class="sep" style="left:1132px;top:23px;height:14px"></div><div class="st" style="left:1141px;top:23px">拴牢</div><div class="sep" style="left:1176px;top:23px;height:14px"></div><div class="sep" style="left:1205px;top:23px;height:14px"></div><div class="sep" style="left:1236px;top:23px;height:14px"></div><div class="sep" style="left:1267px;top:23px;height:14px"></div><div class="sep" style="left:1299px;top:23px;height:14px"></div><div class="sep" style="left:1330px;top:23px;height:14px"></div><div class="sep" style="left:1362px;top:23px;height:14px"></div><div class="sep" style="left:1393px;top:23px;height:14px"></div><div class="sep" style="left:1425px;top:23px;height:14px"></div><div class="sep" style="left:1456px;top:23px;height:14px"></div><div class="sep" style="left:1576px;top:23px;height:14px"></div><div class="sep" style="left:1652px;top:23px;height:14px"></div><svg class="abs" style="left:1182px;top:22px" width="16" height="16" viewBox="0 0 16 16"><rect x="0.5" y="0.5" width="15" height="15" fill="#e9a5b0" stroke="#555" stroke-width="1"/><path d="M3 8 A5 5 0 0 1 12 5 l1.2 -1.2 v4 h-4 l1.3 -1.3 A3 3 0 0 0 5 8z M13 8 A5 5 0 0 1 4 11 l-1.2 1.2 v-4 h4 l-1.3 1.3 A3 3 0 0 0 11 8z" fill="#d62a2a"/></svg><svg class="abs" style="left:1212px;top:21px" width="17" height="17" viewBox="0 0 17 17"><rect x="0" y="0" width="17" height="17" fill="#f7df72"/><path d="M3 3 l9 3 l-3 6z" fill="#d070d0" stroke="#7a3a8a" stroke-width="0.6"/><path d="M8 7 l5 9 l1.5 -3 l3 0z" fill="#fff" stroke="#333" stroke-width="0.7"/></svg><svg class="abs" style="left:1244px;top:22px" width="16" height="16" viewBox="0 0 16 16"><path d="M2 8 l6 -5 l6 5 v7 h-12z" fill="#e9c9a0" stroke="#7a5a33" stroke-width="0.7"/><path d="M1 8 l7 -6 l7 6" fill="none" stroke="#a05a2a" stroke-width="1.4"/><rect x="4" y="10" width="8" height="6" fill="#5b8fd9" opacity="0.7"/><path d="M4 12 h8 M4 14 h8 M7 10 v6 M10 10 v6" stroke="#fff" stroke-width="0.5"/></svg><svg class="abs" style="left:1275px;top:22px" width="16" height="16" viewBox="0 0 16 16"><text x="8" y="13.5" font-size="16" font-weight="bold" text-anchor="middle" font-family="Liberation Sans,sans-serif" fill="#2f5fc0">?</text><ellipse cx="8" cy="15" rx="5" ry="1" fill="#000" opacity="0.2"/></svg><svg class="abs" style="left:1306px;top:22px" width="16" height="16" viewBox="0 0 16 16"><g transform="translate(5 3) scale(0.9)"><path d="M1 4 L6 1 L11 4 L11 10 L6 13 L1 10z" fill="#9ad0e8" stroke="#333" stroke-width="0.9"/><path d="M1 4 L6 7 L11 4 M6 7 V13" fill="none" stroke="#333" stroke-width="0.9"/><path d="M1 4 L6 7 V13 L1 10z" fill="#777"/></g><path d="M1 5 l6 3 M1 11 l6 -3 M0 8 h7" stroke="#d62a2a" stroke-width="1.6"/></svg><svg class="abs" style="left:1337px;top:21px" width="18" height="18" viewBox="0 0 18 18"><rect x="0" y="0" width="18" height="18" fill="#f7df72"/><path d="M2 5 L9 2 L16 5 L16 13 L9 16 L2 13z" fill="#8ad0d0" stroke="#223a9a" stroke-width="0.9"/><path d="M2 5 L9 8 L16 5 L9 2z" fill="#e040e0" stroke="#223a9a" stroke-width="0.7"/><path d="M9 8 V16" stroke="#223a9a" stroke-width="0.9"/></svg><svg class="abs" style="left:1368px;top:22px" width="16" height="16" viewBox="0 0 16 16"><rect x="1" y="6" width="12" height="9" fill="#e8ecf4" stroke="#555" stroke-width="1"/></svg><svg class="abs" style="left:1400px;top:22px" width="16" height="16" viewBox="0 0 16 16"><circle cx="8" cy="8" r="6.5" fill="#fff" stroke="#1d8a1d" stroke-width="2"/><path d="M8 4 v5" stroke="#223a9a" stroke-width="1.6"/></svg><svg class="abs" style="left:1431px;top:22px" width="16" height="16" viewBox="0 0 16 16"><rect x="1" y="3" width="14" height="12" fill="#e8ecf4" stroke="#555" stroke-width="1"/><path d="M8 3 v12" stroke="#555" stroke-width="1"/></svg><div class="st" style="left:1463px;top:23px">LS: 1.00 PS: 1.00</div><div class="st" style="left:1588px;top:23px">单位: 毫米</div><div class="st" style="left:1663px;top:23px;font-size:12.5px;letter-spacing:0.2px"><span style="color:#f00">X =-0057.458</span> Y = 0742.542 Z = 0000.000</div><div class="abs" style="left:1383px;top:9px;width:182px;height:23px;background:#fff;border:1px solid #d0d0d0;border-radius:2px;box-shadow:1px 1px 2px rgba(0,0,0,0.25)"></div><svg class="abs" style="left:1356px;top:3px" width="212" height="32" viewBox="0 0 212 32"><g transform="rotate(-12 18 17)"><rect x="5" y="5" width="26" height="25" rx="5" fill="#f0521e"/><path d="M24 11 q-9 -3 -12 1 q-2 4 6 5 q7 1 5 5 q-3 4 -13 1" fill="none" stroke="#fff" stroke-width="3.4" stroke-linecap="round"/></g><text x="37" y="24.5" font-size="16" font-weight="bold" font-family="Liberation Sans,Noto Sans CJK SC,sans-serif" fill="#1c78d2">中</text><circle cx="61" cy="15" r="1.6" fill="none" stroke="#1c78d2" stroke-width="1.1"/><path d="M67.5 19 q1.6 2.4 -1.4 5" fill="none" stroke="#1c78d2" stroke-width="1.8" stroke-linecap="round"/><circle cx="87" cy="19" r="7.2" fill="none" stroke="#1c78d2" stroke-width="1.5"/><circle cx="84.4" cy="17" r="1" fill="#1c78d2"/><circle cx="89.6" cy="17" r="1" fill="#1c78d2"/><path d="M83.5 21 q3.5 3 7 0" fill="none" stroke="#1c78d2" stroke-width="1.2"/><rect x="106.5" y="11.5" width="6" height="10.5" rx="3" fill="#1c78d2"/><path d="M103.5 19 q0 6 6 6 q6 0 6 -6 M109.5 25 v2.5" fill="none" stroke="#1c78d2" stroke-width="1.4"/><rect x="124" y="13" width="15.5" height="10.5" rx="1.6" fill="#1c78d2"/><path d="M126 15.5 h11.5 M126 18 h11.5" stroke="#fff" stroke-width="1.1" stroke-dasharray="1.4 1.1"/><path d="M128 20.8 h7.5" stroke="#fff" stroke-width="1.2"/><circle cx="155" cy="14.5" r="3" fill="#c7ccd3"/><path d="M148.5 25 q0 -7 6.5 -7 q6.5 0 6.5 7z" fill="#c7ccd3"/><circle cx="160" cy="23" r="3" fill="#fff"/><text x="160" y="25.4" font-size="5.5" text-anchor="middle" font-family="Liberation Sans,sans-serif" fill="#9aa">?</text><g transform="translate(-3 0)"><path d="M173 14 l4 -2 q3 2 6 0 l4 2 l-1.6 4 l-2 -0.8 v8 h-8.8 v-8 l-2 0.8z" fill="#1c78d2"/><rect x="194" y="12" width="6" height="6" fill="none" stroke="#1c78d2" stroke-width="1.2"/><rect x="202" y="12.6" width="5.4" height="5.4" fill="#1c78d2"/><rect x="194.4" y="20" width="5.6" height="5.6" fill="#1c78d2"/><rect x="202" y="20" width="5.6" height="5.6" fill="#1c78d2"/></g></svg></div>
<div id="task"><div class="abs" style="left:48px;top:0;width:344px;height:8px;background:#f2f2f2;border-top:1px solid #bdbdbd"></div><div class="abs" style="left:589px;top:0;width:48px;height:8px;background:#4a4a4a"></div><div class="abs" style="left:1812px;top:3px;font-size:12px;line-height:12px;color:#fff">10:04</div></div>
</body></html>
